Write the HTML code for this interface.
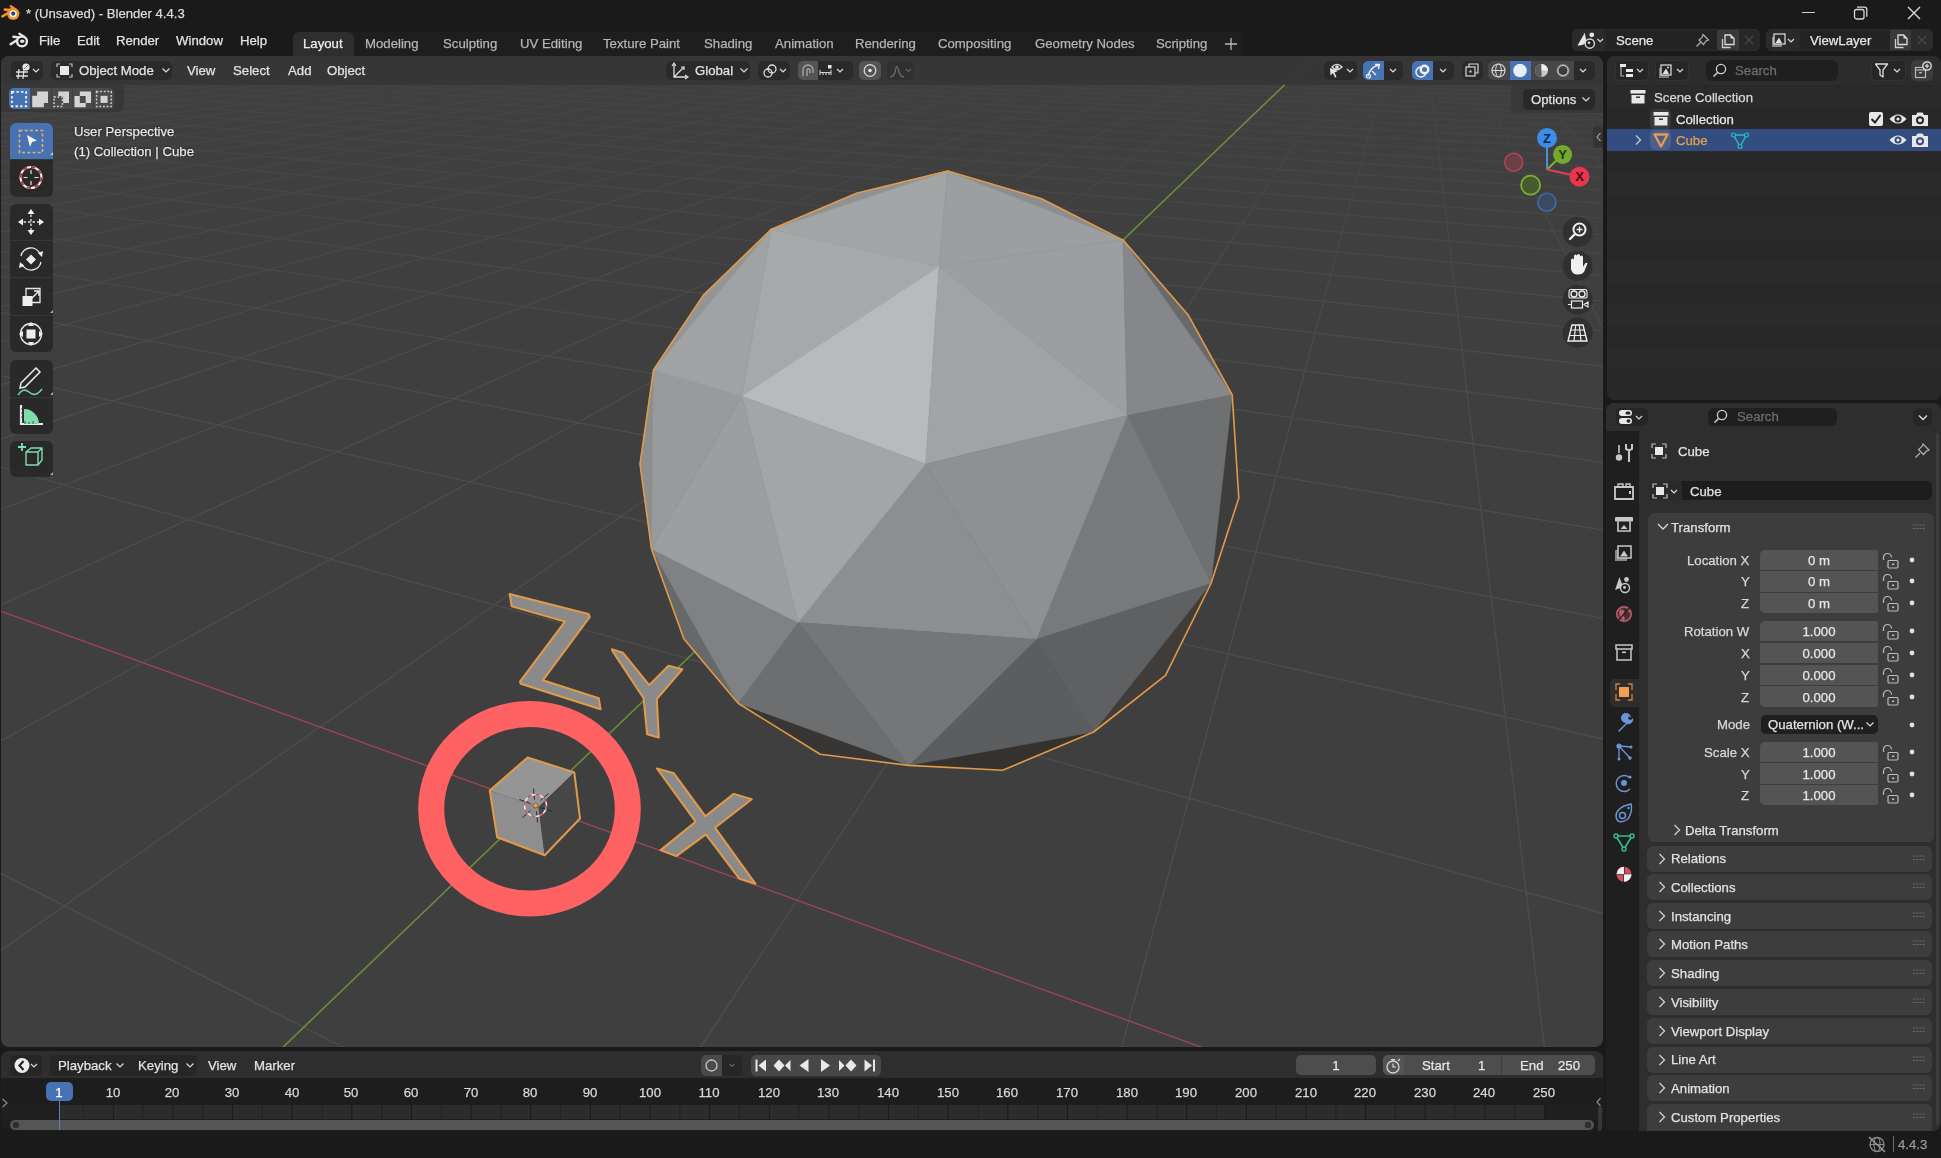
<!DOCTYPE html><html><head><meta charset="utf-8"><style>
html,body{margin:0;padding:0;}
body{width:1941px;height:1158px;background:#1a1a1a;position:relative;overflow:hidden;font-family:"Liberation Sans", sans-serif;}
.r{position:absolute;}
.t{position:absolute;white-space:pre;-webkit-text-stroke:0.25px currentColor;will-change:transform;}
</style></head><body>
<div class="r" style="left:1px;top:56px;width:1602px;height:991px;background:#3f3f3f;border-radius:8px;overflow:hidden;"><svg width="1602" height="991" style="position:absolute;left:0;top:0"><defs><linearGradient id="gf" x1="0" y1="0" x2="0" y2="1"><stop offset="0" stop-color="#fff" stop-opacity="0.2"/><stop offset="0.12" stop-color="#fff" stop-opacity="0.45"/><stop offset="0.35" stop-color="#fff" stop-opacity="0.9"/><stop offset="1" stop-color="#fff" stop-opacity="1"/></linearGradient><mask id="gm" maskUnits="userSpaceOnUse" x="0" y="0" width="1602" height="991"><rect width="1602" height="991" fill="url(#gf)"/></mask></defs><path d="M-392.0 1099.5L-114.8 1337.2M-399.4 614.5L1020.4 1335.8M-400.8 299.7L1991.1 965.9M-399.8 229.1L1992.5 771.5M-399.0 180.3L1993.5 637.1M-400.5 144.1L1994.3 538.7M-399.9 116.9L1994.8 463.5M-401.0 95.1L1995.3 404.2M-400.4 77.7L1995.6 356.2M-399.9 63.4L1995.9 316.6M-400.7 51.2L1996.2 283.3M-400.3 40.9L1996.4 254.9M-400.0 32.1L1996.6 230.5M-400.6 24.3L1996.7 209.3M-400.3 17.5L1996.9 190.6M-400.8 11.5L1997.0 174.0M-400.5 6.1L1997.1 159.3M-400.2 1.3L1997.2 146.0M-400.7 -3.1L1997.3 134.1M-400.5 -7.0L1997.4 123.2M-400.9 -10.6L1997.5 113.4M-400.6 -13.9L1997.5 104.3M-400.4 -16.9L1997.6 96.0M-400.8 -19.7L1997.6 88.4M-400.6 -22.2L1997.7 81.3M-400.9 -24.6L1997.7 74.8M-400.7 -26.8L1997.8 68.7M-400.5 -28.9L1997.8 63.0M-400.8 -30.8L1997.9 57.7M-400.7 -32.6L1997.9 52.7M-401.0 -34.3L1997.9 48.1M-400.8 -35.9L1998.0 43.7M-400.6 -37.4L1998.0 39.6M-400.9 -38.8L1998.0 35.7M-400.7 -40.1L1998.1 32.0M-401.0 -41.4L1998.1 28.5M-400.8 -42.6L1998.1 25.2M-400.7 -43.8L1998.1 22.1M-400.9 -44.8L1998.2 19.1M-400.8 -45.9L1998.2 16.2M-401.0 -46.9L1998.2 13.5M-400.8 -47.8L1998.2 11.0M-400.7 -48.7L1998.2 8.5M-400.9 -49.5L1998.3 6.1M-400.8 -50.4L1998.3 3.9M-401.0 -51.1L1998.3 1.7M-400.9 -51.9L1998.3 -0.3M-400.8 -52.6L1998.3 -2.3M-400.9 -53.3L1998.3 -4.2M-400.8 -54.0L1998.3 -6.1M-400.7 -54.6L1998.4 -7.8M-400.9 -55.2L1998.4 -9.5M-400.8 -55.8L1998.4 -11.2M-401.0 -56.4L1998.4 -12.7M-400.8 -57.0L1998.4 -14.3M-389.0 -57.3L1998.4 -15.7M-375.5 -57.6L1998.4 -17.1M-362.2 -57.9L1998.4 -18.5M-349.1 -58.1L1998.4 -19.8M-336.2 -58.4L1998.5 -21.1M-323.5 -58.7L1998.5 -22.4M-310.9 -59.0L1998.5 -23.6M-298.6 -59.2L1998.5 -24.7M-286.4 -59.5L1998.5 -25.9M-274.4 -59.7L1998.5 -27.0M-262.5 -60.0L1998.5 -28.0M-250.8 -60.2L1998.5 -29.0M-239.3 -60.5L1998.5 -30.1M-227.9 -60.7L1998.5 -31.0M-216.7 -61.0L1998.5 -32.0M-205.7 -61.2L1998.5 -32.9M-194.8 -61.4L1998.6 -33.8M-184.0 -61.7L1998.6 -34.7M-173.4 -61.9L1998.6 -35.5M-162.9 -62.1L1998.6 -36.3M-152.6 -62.3L1998.6 -37.1M-142.4 -62.6L1998.6 -37.9M-132.3 -62.8L1998.6 -38.7M-122.4 -63.0L1998.6 -39.4M-112.5 -63.2L1998.6 -40.2M-102.8 -63.4L1998.6 -40.9M-93.3 -63.6L1998.6 -41.6M-83.8 -63.8L1998.6 -42.2M-74.5 -64.0L1998.6 -42.9M-65.3 -64.2L1998.6 -43.5M-56.2 -64.4L1998.6 -44.2M-47.2 -64.6L1998.6 -44.8M-38.3 -64.8L1998.6 -45.4M-29.5 -65.0L1998.6 -46.0M-20.9 -65.2L1998.6 -46.5M-12.3 -65.4L1998.7 -47.1M-401.0 -57.0L-3.8 -65.5M-400.7 -56.8L1.3 -65.5M-400.8 -56.6L6.5 -65.4M-400.9 -56.4L11.8 -65.4M-400.9 -56.2L17.0 -65.3M-400.7 -56.0L22.3 -65.3M-400.7 -55.8L27.6 -65.3M-400.8 -55.6L33.0 -65.2M-400.9 -55.3L38.4 -65.2M-401.0 -55.1L43.8 -65.1M-400.7 -54.9L49.2 -65.1M-400.8 -54.7L54.7 -65.0M-400.9 -54.4L60.2 -65.0M-400.9 -54.2L65.8 -64.9M-400.7 -53.9L71.4 -64.9M-400.7 -53.7L77.0 -64.8M-400.8 -53.4L82.6 -64.8M-400.9 -53.2L88.3 -64.7M-401.0 -52.9L94.0 -64.7M-400.7 -52.7L99.8 -64.6M-400.8 -52.4L105.6 -64.6M-400.9 -52.2L111.4 -64.5M-401.0 -51.9L117.3 -64.5M-400.7 -51.6L123.2 -64.4M-400.8 -51.3L129.1 -64.3M-400.8 -51.0L135.1 -64.3M-400.9 -50.8L141.1 -64.2M-400.6 -50.5L147.2 -64.2M-400.7 -50.2L153.2 -64.1M-400.8 -49.9L159.4 -64.1M-400.9 -49.6L165.5 -64.0M-401.0 -49.2L171.7 -64.0M-400.7 -48.9L178.0 -63.9M-400.8 -48.6L184.3 -63.9M-400.9 -48.3L190.6 -63.8M-400.9 -47.9L197.0 -63.7M-400.6 -47.6L203.4 -63.7M-400.7 -47.3L209.8 -63.6M-400.8 -46.9L216.3 -63.6M-400.9 -46.5L222.9 -63.5M-400.6 -46.2L229.5 -63.5M-400.7 -45.8L236.1 -63.4M-400.8 -45.4L242.7 -63.3M-400.9 -45.0L249.5 -63.3M-401.0 -44.7L256.2 -63.2M-400.6 -44.3L263.0 -63.2M-400.7 -43.9L269.9 -63.1M-400.8 -43.4L276.8 -63.0M-400.9 -43.0L283.7 -63.0M-400.6 -42.6L290.7 -62.9M-400.7 -42.2L297.7 -62.8M-400.8 -41.7L304.8 -62.8M-400.9 -41.2L312.0 -62.7M-400.5 -40.8L319.1 -62.7M-400.6 -40.3L326.4 -62.6M-400.7 -39.8L333.7 -62.5M-400.8 -39.3L341.0 -62.5M-401.0 -38.8L348.4 -62.4M-400.6 -38.3L355.8 -62.3M-400.7 -37.8L363.3 -62.3M-400.8 -37.2L370.9 -62.2M-400.9 -36.7L378.5 -62.1M-400.5 -36.1L386.1 -62.1M-400.6 -35.6L393.8 -62.0M-400.7 -35.0L401.6 -61.9M-400.9 -34.4L409.4 -61.8M-401.0 -33.8L417.3 -61.8M-400.5 -33.1L425.2 -61.7M-400.7 -32.5L433.2 -61.6M-400.8 -31.8L441.2 -61.6M-400.9 -31.2L449.3 -61.5M-400.5 -30.5L457.5 -61.4M-400.6 -29.8L465.7 -61.3M-400.7 -29.0L474.0 -61.3M-400.9 -28.3L482.4 -61.2M-400.4 -27.5L490.8 -61.1M-400.5 -26.8L499.2 -61.0M-400.7 -25.9L507.8 -61.0M-400.8 -25.1L516.4 -60.9M-401.0 -24.3L525.1 -60.8M-400.4 -23.4L533.8 -60.7M-400.6 -22.5L542.6 -60.7M-400.8 -21.6L551.5 -60.6M-400.9 -20.6L560.4 -60.5M-400.4 -19.7L569.4 -60.4M-400.5 -18.7L578.5 -60.3M-400.7 -17.6L587.6 -60.3M-400.8 -16.6L596.8 -60.2M-400.3 -15.5L606.1 -60.1M-400.4 -14.3L615.5 -60.0M-400.6 -13.2L624.9 -59.9M-400.8 -12.0L634.4 -59.8M-400.9 -10.7L644.0 -59.8M-400.3 -9.4L653.7 -59.7M-400.5 -8.1L663.4 -59.6M-400.7 -6.7L673.3 -59.5M-400.9 -5.3L683.2 -59.4M-400.2 -3.8L693.1 -59.3M-400.4 -2.3L703.2 -59.2M-400.6 -0.7L713.3 -59.1M-400.8 1.0L723.6 -59.0M-401.0 2.7L733.9 -58.9M-400.2 4.4L744.3 -58.9M-400.5 6.3L754.8 -58.8M-400.7 8.2L765.4 -58.7M-400.9 10.3L776.0 -58.6M-400.1 12.3L786.8 -58.5M-400.3 14.5L797.6 -58.4M-400.6 16.8L808.6 -58.3M-400.8 19.2L819.6 -58.2M-399.9 21.7L830.7 -58.1M-400.2 24.3L841.9 -58.0M-400.4 27.1L853.2 -57.9M-400.7 30.0L864.7 -57.8M-401.0 33.0L876.2 -57.7M-400.0 36.1L887.8 -57.6M-400.2 39.5L899.5 -57.5M-400.5 43.1L911.4 -57.4M-400.8 46.9L923.3 -57.3M-399.7 50.8L935.3 -57.2M-400.0 55.1L947.5 -57.0M-400.3 59.6L959.7 -56.9M-400.7 64.4L972.1 -56.8M-399.4 69.4L984.6 -56.7M-399.7 74.9L997.2 -56.6M-400.1 80.8L1009.9 -56.5M-400.5 87.2L1022.7 -56.4M-400.9 94.0L1035.6 -56.3M-399.4 101.2L1048.7 -56.1M-399.8 109.2L1061.9 -56.0M-400.2 118.0L1075.2 -55.9M-400.7 127.5L1088.6 -55.8M-398.9 137.6L1102.2 -55.7M-399.3 149.1L1115.9 -55.5M-399.8 161.9L1129.7 -55.4M-400.4 176.1L1143.7 -55.3M-398.1 191.5L1157.8 -55.2M-398.6 209.3L1172.0 -55.0M-399.2 229.7L1186.4 -54.9M-399.9 253.0L1200.9 -54.8M-400.7 279.9L1215.5 -54.7M-397.5 310.6L1230.3 -54.5M-398.2 348.0L1245.3 -54.4M-399.1 393.2L1260.4 -54.2M-400.2 448.8L1275.6 -54.1M-395.1 516.8L1291.0 -54.0M-395.9 607.4L1306.6 -53.8M-397.0 729.8L1322.3 -53.7M-398.6 904.7L1338.2 -53.6M-401.0 1174.9L1354.2 -53.4M471.1 1338.1L1386.8 -53.1M1027.6 1334.8L1403.4 -53.0M1585.0 1343.5L1420.1 -52.8M1998.1 1051.1L1437.0 -52.7M1998.7 552.6L1454.1 -52.5M1998.9 355.6L1471.4 -52.4M1997.9 249.5L1488.8 -52.2M1998.2 184.0L1506.5 -52.1M1998.4 139.2L1524.3 -51.9M1998.5 106.7L1542.3 -51.7M1998.7 82.0L1560.6 -51.6M1998.7 62.6L1579.0 -51.4M1998.8 47.0L1597.6 -51.2M1998.9 34.1L1616.5 -51.1M1998.9 23.3L1635.5 -50.9M1999.0 14.2L1654.8 -50.7M1998.7 6.2L1674.3 -50.6M1998.7 -0.6L1694.0 -50.4M1998.8 -6.6L1713.9 -50.2M1998.8 -11.9L1734.1 -50.0M1998.8 -16.7L1754.5 -49.8M1998.9 -20.9L1775.2 -49.7M1998.9 -24.7L1796.1 -49.5M1998.9 -28.2L1817.2 -49.3M1999.0 -31.3L1838.6 -49.1M1999.0 -34.2L1860.2 -48.9M1999.0 -36.9L1882.2 -48.7M1998.8 -39.3L1904.3 -48.5M1998.8 -41.6L1926.8 -48.3M1998.9 -43.7L1949.5 -48.1M1998.9 -45.6L1972.5 -47.9M1998.9 -47.4L1995.8 -47.7" stroke="#4e4e4e" stroke-width="1.3" fill="none" mask="url(#gm)"/><line x1="-1.0" y1="554.8" x2="1699.0" y2="1172.3" stroke="#9c4452" stroke-width="1.4" stroke-opacity="1"/><line x1="182.5" y1="1086.8" x2="1399.0" y2="-82.1" stroke="#6b8c3a" stroke-width="1.6" stroke-opacity="1"/><polygon points="946.7,115.0 1040.6,142.7 1122.1,184.1" fill="#8b8d8f" stroke="#8b8d8f" stroke-width="0.6" stroke-linejoin="round" /><polygon points="1122.1,184.1 1187.0,258.7 1231.2,338.9" fill="#67696b" stroke="#67696b" stroke-width="0.6" stroke-linejoin="round" /><polygon points="1231.2,338.9 1237.8,442.0 1210.0,527.5" fill="#3d3d3d" stroke="#3d3d3d" stroke-width="0.6" stroke-linejoin="round" /><polygon points="1210.0,527.5 1164.5,619.3 1092.6,676.0" fill="#3f3c39" stroke="#3f3c39" stroke-width="0.6" stroke-linejoin="round" /><polygon points="1092.6,676.0 1001.6,714.3 908.0,709.4" fill="#34312e" stroke="#34312e" stroke-width="0.6" stroke-linejoin="round" /><polygon points="908.0,709.4 819.2,698.3 737.1,647.2" fill="#383634" stroke="#383634" stroke-width="0.6" stroke-linejoin="round" /><polygon points="737.1,647.2 682.8,582.7 650.5,493.0" fill="#66686a" stroke="#66686a" stroke-width="0.6" stroke-linejoin="round" /><polygon points="650.5,493.0 639.0,408.0 652.5,314.0" fill="#8c8e90" stroke="#8c8e90" stroke-width="0.6" stroke-linejoin="round" /><polygon points="652.5,314.0 702.2,239.4 769.9,173.6" fill="#929496" stroke="#929496" stroke-width="0.6" stroke-linejoin="round" /><polygon points="769.9,173.6 855.6,137.2 946.7,115.0" fill="#8f9193" stroke="#8f9193" stroke-width="0.6" stroke-linejoin="round" /><polygon points="946.7,115.0 769.9,173.6 938.1,210.4" fill="#a2a4a5" stroke="#a2a4a5" stroke-width="0.6" stroke-linejoin="round" /><polygon points="769.9,173.6 938.1,210.4 740.9,340.3" fill="#a6a8a9" stroke="#a6a8a9" stroke-width="0.6" stroke-linejoin="round" /><polygon points="946.7,115.0 1122.1,184.1 938.1,210.4" fill="#9c9ea0" stroke="#9c9ea0" stroke-width="0.6" stroke-linejoin="round" /><polygon points="938.1,210.4 1122.1,184.1 1126.3,359.6" fill="#9c9ea0" stroke="#9c9ea0" stroke-width="0.6" stroke-linejoin="round" /><polygon points="924.7,408.0 740.9,340.3 938.1,210.4" fill="#b8babb" stroke="#b8babb" stroke-width="0.6" stroke-linejoin="round" /><polygon points="924.7,408.0 938.1,210.4 1126.3,359.6" fill="#a1a3a4" stroke="#a1a3a4" stroke-width="0.6" stroke-linejoin="round" /><polygon points="1122.1,184.1 1231.2,338.9 1126.3,359.6" fill="#85878a" stroke="#85878a" stroke-width="0.6" stroke-linejoin="round" /><polygon points="1126.3,359.6 1231.2,338.9 1210.0,527.5" fill="#6e7072" stroke="#6e7072" stroke-width="0.6" stroke-linejoin="round" /><polygon points="1126.3,359.6 1210.0,527.5 1035.2,583.4" fill="#77797a" stroke="#77797a" stroke-width="0.6" stroke-linejoin="round" /><polygon points="924.7,408.0 1126.3,359.6 1035.2,583.4" fill="#8e9091" stroke="#8e9091" stroke-width="0.6" stroke-linejoin="round" /><polygon points="1035.2,583.4 1210.0,527.5 1092.6,676.0" fill="#5f6061" stroke="#5f6061" stroke-width="0.6" stroke-linejoin="round" /><polygon points="1035.2,583.4 1092.6,676.0 908.0,709.4" fill="#5c5d5e" stroke="#5c5d5e" stroke-width="0.6" stroke-linejoin="round" /><polygon points="924.7,408.0 1035.2,583.4 797.1,566.6" fill="#8c8e8f" stroke="#8c8e8f" stroke-width="0.6" stroke-linejoin="round" /><polygon points="797.1,566.6 1035.2,583.4 908.0,709.4" fill="#757677" stroke="#757677" stroke-width="0.6" stroke-linejoin="round" /><polygon points="797.1,566.6 908.0,709.4 737.1,647.2" fill="#6d6e6f" stroke="#6d6e6f" stroke-width="0.6" stroke-linejoin="round" /><polygon points="797.1,566.6 737.1,647.2 650.5,493.0" fill="#808183" stroke="#808183" stroke-width="0.6" stroke-linejoin="round" /><polygon points="924.7,408.0 797.1,566.6 740.9,340.3" fill="#a3a5a6" stroke="#a3a5a6" stroke-width="0.6" stroke-linejoin="round" /><polygon points="740.9,340.3 797.1,566.6 650.5,493.0" fill="#9c9ea0" stroke="#9c9ea0" stroke-width="0.6" stroke-linejoin="round" /><polygon points="740.9,340.3 650.5,493.0 652.5,314.0" fill="#989a9c" stroke="#989a9c" stroke-width="0.6" stroke-linejoin="round" /><polygon points="740.9,340.3 652.5,314.0 769.9,173.6" fill="#a0a2a3" stroke="#a0a2a3" stroke-width="0.6" stroke-linejoin="round" /><polygon points="946.7,115.0 1040.6,142.7 1122.1,184.1 1187.0,258.7 1231.2,338.9 1237.8,442.0 1210.0,527.5 1164.5,619.3 1092.6,676.0 1001.6,714.3 908.0,709.4 819.2,698.3 737.1,647.2 682.8,582.7 650.5,493.0 639.0,408.0 652.5,314.0 702.2,239.4 769.9,173.6 855.6,137.2" fill="none" stroke="#e39a48" stroke-width="1.6" stroke-linejoin="round"/><polygon points="508.7,538.0 587.4,558.0 588.8,560.8 541.8,624.3 597.8,642.3 599.6,653.3 519.7,627.8 519.0,625.7 563.9,565.6 510.7,550.4" fill="#8a8a8a" stroke="#e39a48" stroke-width="2" stroke-linejoin="round" /><polygon points="610.9,593.2 621.9,596.7 648.2,629.1 667.5,609.8 681.3,613.3 655.8,643.0 657.8,681.6 646.1,678.2 642.6,642.3 611.6,595.3" fill="#8a8a8a" stroke="#e39a48" stroke-width="2" stroke-linejoin="round" /><polygon points="655.9,712.5 672.9,717.3 704.3,760.2 732.7,737.9 750.8,743.3 714.0,771.7 754.5,827.9 738.1,822.5 704.9,778.4 675.3,800.1 659.6,794.1 694.6,765.7" fill="#8a8a8a" stroke="#e39a48" stroke-width="2" stroke-linejoin="round" /><polygon points="526.6,701.4 573.3,716.4 537.5,751.0 488.8,734.6" fill="#959595" /><polygon points="488.8,734.6 537.5,751.0 543.7,799.3 496.1,781.2" fill="#8e8e8e" /><polygon points="573.3,716.4 579.0,762.5 543.7,799.3 537.5,751.0" fill="#474747" /><polygon points="526.6,701.4 573.3,716.4 579.0,762.5 543.7,799.3 496.1,781.2 488.8,734.6" fill="none" stroke="#e39a48" stroke-width="2" stroke-linejoin="round" /><g transform="translate(534.5,749.5)"><line x1="-16" y1="-6" x2="-5" y2="-2" stroke="#2a2a2a" stroke-width="1"/><line x1="5" y1="2" x2="17" y2="6" stroke="#2a2a2a" stroke-width="1"/><line x1="-2" y1="-17" x2="-1" y2="-6" stroke="#2a2a2a" stroke-width="1"/><line x1="1" y1="6" x2="2" y2="17" stroke="#2a2a2a" stroke-width="1"/><line x1="13" y1="-12" x2="5" y2="-5" stroke="#2a2a2a" stroke-width="1"/><line x1="-5" y1="5" x2="-13" y2="12" stroke="#2a2a2a" stroke-width="1"/><circle r="11" fill="none" stroke="#e8e8e8" stroke-width="1.5"/><circle r="11" fill="none" stroke="#c04858" stroke-width="1.5" stroke-dasharray="4.3 4.3"/><circle r="2.4" fill="#f0a030" stroke="#444" stroke-width="0.6"/></g><ellipse cx="528.5" cy="752.8" rx="98.3" ry="94.8" fill="none" stroke="#fe6262" stroke-width="26"/><circle cx="1545.9" cy="146.2" r="9" fill="#3a4a60" stroke="#3f6aa8" stroke-width="1.6" fill-opacity="1"/><circle cx="1512.7" cy="106.3" r="9" fill="#6a4048" stroke="#b04455" stroke-width="1.6" fill-opacity="1"/><circle cx="1529.6" cy="129.2" r="9.5" fill="#4a5a30" stroke="#7ab030" stroke-width="1.8" fill-opacity="1"/><line x1="1546.0" y1="113.5" x2="1546.0" y2="82.0" stroke="#4a90e0" stroke-width="2" stroke-opacity="1"/><line x1="1546.0" y1="113.5" x2="1561.6" y2="98.5" stroke="#80b030" stroke-width="2" stroke-opacity="1"/><line x1="1546.0" y1="113.5" x2="1578.5" y2="120.8" stroke="#e04050" stroke-width="2" stroke-opacity="1"/><circle cx="1546.0" cy="82.0" r="10" fill="#3d8ce8" fill-opacity="1"/><circle cx="1561.6" cy="98.5" r="9.5" fill="#76a830" fill-opacity="1"/><circle cx="1578.5" cy="120.8" r="10" fill="#e8364e" fill-opacity="1"/><text x="1546" y="86.5" font-family="Liberation Sans" font-size="13" font-weight="bold" fill="#0c2a55" text-anchor="middle">Z</text><text x="1561.6" y="103.0" font-family="Liberation Sans" font-size="13" font-weight="bold" fill="#1c3a0a" text-anchor="middle">Y</text><text x="1578.5" y="125.30000000000001" font-family="Liberation Sans" font-size="13" font-weight="bold" fill="#4a0c14" text-anchor="middle">X</text><circle cx="1576.6" cy="176.0" r="15" fill="#2e2e2e" fill-opacity="0.85"/><circle cx="1576.6" cy="209.8" r="15" fill="#2e2e2e" fill-opacity="0.85"/><circle cx="1576.6" cy="243.7" r="15" fill="#2e2e2e" fill-opacity="0.85"/><circle cx="1576.6" cy="276.8" r="15" fill="#2e2e2e" fill-opacity="0.85"/></svg><div style="position:absolute;left:0;top:0;width:1602px;height:28px;background:rgba(40,40,40,0.55)"></div></div>
<svg class="r" style="left:0px;top:0px;" width="24" height="24" viewBox="0 0 24 24"><g stroke="#f0902a" stroke-linecap="round" fill="none"><path d="M10.8 6.3 L15.5 9.6" stroke-width="2.4"/><path d="M4.8 9.6 L12.5 10.2" stroke-width="2.6"/><path d="M2.4 16.4 L9.5 12" stroke-width="2.6"/></g><circle cx="13.2" cy="13.8" r="6.2" fill="#f0902a"/><circle cx="13.2" cy="13.8" r="3.6" fill="#f4f0ea"/><circle cx="13.2" cy="13.6" r="2.1" fill="#1a4a8a"/></svg>
<div class="t" style="left:26.4px;top:6.9px;font-size:13.1px;line-height:13.1px;color:#dcdcdc;font-weight:normal;">* (Unsaved) - Blender 4.4.3</div>
<div class="r" style="left:1802.0px;top:12.0px;width:12.5px;height:1.2px;background:#d0d0d0;border-radius:0px;"></div>
<svg class="r" style="left:1853px;top:5px;" width="16" height="16" viewBox="0 0 16 16"><rect x="1.5" y="4.5" width="9.5" height="9.5" rx="2" fill="none" stroke="#d8d8d8" stroke-width="1.3"/><path d="M4 2.2 H11.5 Q13.8 2.2 13.8 4.5 V11.8" fill="none" stroke="#d8d8d8" stroke-width="1.3"/></svg>
<svg class="r" style="left:1906px;top:5px;" width="16" height="16" viewBox="0 0 16 16"><path d="M2 2 L14 14 M14 2 L2 14" stroke="#dcdcdc" stroke-width="1.4"/></svg>
<svg class="r" style="left:0px;top:28px;" width="32" height="28" viewBox="0 0 32 28"><g stroke="#e6e6e6" stroke-linecap="round" fill="none"><path d="M19.3 5.6 L24 8.8" stroke-width="2.3"/><path d="M13.4 8.8 L21 9.6" stroke-width="2.4"/><path d="M10.6 16.2 L17.6 11.8" stroke-width="2.5"/></g><circle cx="22" cy="13.4" r="6.1" fill="#e6e6e6"/><circle cx="22" cy="13.4" r="3.7" fill="#1a1a1a"/><ellipse cx="22.2" cy="13.3" rx="2.2" ry="1.8" fill="#e6e6e6"/></svg>
<div class="t" style="left:38.6px;top:34.2px;font-size:13.2px;line-height:13.2px;color:#e2e2e2;font-weight:normal;">File</div>
<div class="t" style="left:76.5px;top:34.2px;font-size:13.2px;line-height:13.2px;color:#e2e2e2;font-weight:normal;">Edit</div>
<div class="t" style="left:116.0px;top:34.2px;font-size:13.2px;line-height:13.2px;color:#e2e2e2;font-weight:normal;">Render</div>
<div class="t" style="left:175.7px;top:34.2px;font-size:13.2px;line-height:13.2px;color:#e2e2e2;font-weight:normal;">Window</div>
<div class="t" style="left:240.0px;top:34.2px;font-size:13.2px;line-height:13.2px;color:#e2e2e2;font-weight:normal;">Help</div>
<div class="r" style="left:293.0px;top:32.0px;width:949.0px;height:24.0px;background:#1e1e1e;border-radius:0px;border-radius:6px 6px 0 0;"></div>
<div class="r" style="left:293.4px;top:32.3px;width:60.4px;height:23.7px;background:#2e2e2e;border-radius:0px;border-radius:6px 6px 0 0;"></div>
<div class="t" style="left:303.3px;top:37.0px;font-size:13.2px;line-height:13.2px;color:#eeeeee;font-weight:normal;">Layout</div>
<div class="t" style="left:365.3px;top:37.0px;font-size:13.2px;line-height:13.2px;color:#b4b4b4;font-weight:normal;">Modeling</div>
<div class="t" style="left:442.8px;top:37.0px;font-size:13.2px;line-height:13.2px;color:#b4b4b4;font-weight:normal;">Sculpting</div>
<div class="t" style="left:520.3px;top:37.0px;font-size:13.2px;line-height:13.2px;color:#b4b4b4;font-weight:normal;">UV Editing</div>
<div class="t" style="left:603.4px;top:37.0px;font-size:13.2px;line-height:13.2px;color:#b4b4b4;font-weight:normal;">Texture Paint</div>
<div class="t" style="left:703.6px;top:37.0px;font-size:13.2px;line-height:13.2px;color:#b4b4b4;font-weight:normal;">Shading</div>
<div class="t" style="left:774.5px;top:37.0px;font-size:13.2px;line-height:13.2px;color:#b4b4b4;font-weight:normal;">Animation</div>
<div class="t" style="left:854.6px;top:37.0px;font-size:13.2px;line-height:13.2px;color:#b4b4b4;font-weight:normal;">Rendering</div>
<div class="t" style="left:938.4px;top:37.0px;font-size:13.2px;line-height:13.2px;color:#b4b4b4;font-weight:normal;">Compositing</div>
<div class="t" style="left:1034.7px;top:37.0px;font-size:13.2px;line-height:13.2px;color:#b4b4b4;font-weight:normal;">Geometry Nodes</div>
<div class="t" style="left:1156.0px;top:37.0px;font-size:13.2px;line-height:13.2px;color:#b4b4b4;font-weight:normal;">Scripting</div>
<svg class="r" style="left:1224px;top:37px;" width="14" height="14" viewBox="0 0 14 14"><path d="M7 1 V13 M1 7 H13" stroke="#b8b8b8" stroke-width="1.3"/></svg>
<div class="r" style="left:1572.2px;top:29.0px;width:188.0px;height:22.0px;background:#232323;border-radius:5px;border:1px solid #2c2c2c;box-sizing:border-box;"></div>
<div class="r" style="left:1573.0px;top:30.0px;width:33.0px;height:20.0px;background:#2a2a2a;border-radius:4px;"></div>
<svg class="r" style="left:1574px;top:30px;" width="32" height="20" viewBox="0 0 32 20"><path d="M3.5 15.5 L10.8 2.8 L12.5 12 Q9 16 3.5 15.5 Z" fill="#e6e6e6"/><circle cx="17.8" cy="4.8" r="2.4" fill="#e6e6e6"/><circle cx="15.8" cy="13.6" r="4.6" fill="#232323" stroke="#d8d8d8" stroke-width="1.4"/><circle cx="15" cy="12.8" r="1.3" fill="#d8d8d8"/><path d="M23.5 9 L26.2 11.7 L29 9" fill="none" stroke="#dcdcdc" stroke-width="1.2"/></svg>
<div class="t" style="left:1616.0px;top:33.8px;font-size:13.2px;line-height:13.2px;color:#e6e6e6;font-weight:normal;">Scene</div>
<svg class="r" style="left:1694px;top:32px;" width="18" height="17" viewBox="0 0 18 17"><path d="M9 2.5 L14.5 8 L12 9 L9.5 12.5 L5 8 L8 5.5 Z" fill="none" stroke="#b0b0b0" stroke-width="1.2"/><path d="M6.5 10.5 L2.5 14.5" stroke="#b0b0b0" stroke-width="1.3"/></svg>
<div class="r" style="left:1717.0px;top:30.0px;width:22.0px;height:20.0px;background:#3a3a3a;border-radius:0px;"></div>
<div class="r" style="left:1739.0px;top:30.0px;width:20.5px;height:20.0px;background:#282828;border-radius:0px;border-radius:0 4px 4px 0;"></div>
<svg class="r" style="left:1718px;top:31px;" width="20" height="20" viewBox="0 0 20 20"><path d="M4.5 8 V16.5 H12.5" fill="none" stroke="#cfcfcf" stroke-width="1.3"/><path d="M7 4 H12.5 L16 7.5 V13.5 H7 Z" fill="none" stroke="#dcdcdc" stroke-width="1.3"/><path d="M12.5 4 V7.5 H16" fill="#dcdcdc"/></svg>
<svg class="r" style="left:1742px;top:33px;" width="14" height="14" viewBox="0 0 14 14"><path d="M3 3 L11 11 M11 3 L3 11" stroke="#484848" stroke-width="1.2"/></svg>
<div class="r" style="left:1766.4px;top:29.0px;width:166.9px;height:22.0px;background:#232323;border-radius:5px;border:1px solid #2c2c2c;box-sizing:border-box;"></div>
<div class="r" style="left:1767.0px;top:30.0px;width:33.0px;height:20.0px;background:#2a2a2a;border-radius:4px;"></div>
<svg class="r" style="left:1770px;top:31px;" width="30" height="18" viewBox="0 0 30 18"><rect x="2" y="6" width="10" height="10" fill="#888"/><rect x="4" y="3" width="11" height="10" fill="#2a2a2a" stroke="#e0e0e0" stroke-width="1.2"/><path d="M5.5 12 L9 6.5 L12 12 Z" fill="#e0e0e0"/><path d="M18 8 L21 11 L24 8" fill="none" stroke="#dcdcdc" stroke-width="1.2"/></svg>
<div class="t" style="left:1809.5px;top:33.8px;font-size:13.2px;line-height:13.2px;color:#e6e6e6;font-weight:normal;">ViewLayer</div>
<div class="r" style="left:1889.5px;top:30.0px;width:21.5px;height:20.0px;background:#3a3a3a;border-radius:0px;"></div>
<svg class="r" style="left:1891px;top:31px;" width="20" height="20" viewBox="0 0 20 20"><path d="M4.5 8 V16.5 H12.5" fill="none" stroke="#cfcfcf" stroke-width="1.3"/><path d="M7 4 H12.5 L16 7.5 V13.5 H7 Z" fill="none" stroke="#dcdcdc" stroke-width="1.3"/><path d="M12.5 4 V7.5 H16" fill="#dcdcdc"/></svg>
<div class="r" style="left:1911.0px;top:30.0px;width:21.5px;height:20.0px;background:#2c2c2c;border-radius:0px;border-radius:0 4px 4px 0;"></div>
<svg class="r" style="left:1915px;top:33px;" width="14" height="14" viewBox="0 0 14 14"><path d="M3 3 L11 11 M11 3 L3 11" stroke="#484848" stroke-width="1.2"/></svg>
<div class="r" style="left:1.0px;top:56.0px;width:1602.0px;height:29.0px;background:rgba(54,54,54,0.9);border-radius:0px;border-radius:8px 8px 0 0;"></div>
<div class="r" style="left:1.0px;top:85.0px;width:122.6px;height:27.0px;background:rgba(52,52,52,0.7);border-radius:0px;border-radius:0 0 6px 0;"></div>
<div class="r" style="left:10.7px;top:60.7px;width:32.2px;height:19.1px;background:#2a2a2a;border-radius:5px;"></div>
<svg class="r" style="left:13px;top:61px;" width="30" height="19" viewBox="0 0 30 19"><path d="M3 11 H15 M3 15 H15 M6 8 L5 18 M11 8 L10 18" stroke="#dedede" stroke-width="1.3"/><circle cx="13" cy="6" r="3.6" fill="#e8e8e8"/><path d="M11 8 L15 4" stroke="#666" stroke-width="0.8"/><path d="M20 8 L23 11 L26 8" fill="none" stroke="#dcdcdc" stroke-width="1.2"/></svg>
<div class="r" style="left:51.1px;top:60.7px;width:121.0px;height:19.1px;background:#2a2a2a;border-radius:5px;"></div>
<svg class="r" style="left:54px;top:61px;" width="22" height="19" viewBox="0 0 22 19"><rect x="6" y="5" width="9" height="9" fill="#e8e8e8"/><path d="M3 6 V3 H6 M15 3 H18 V6 M18 13 V16 H15 M6 16 H3 V13" fill="none" stroke="#bdbdbd" stroke-width="1.2"/></svg>
<div class="t" style="left:79.1px;top:63.8px;font-size:13.2px;line-height:13.2px;color:#e2e2e2;font-weight:normal;">Object Mode</div>
<svg class="r" style="left:160px;top:64px;" width="12" height="12" viewBox="0 0 12 12"><path d="M2.5 4.5 L6 8 L9.5 4.5" fill="none" stroke="#dcdcdc" stroke-width="1.2"/></svg>
<div class="t" style="left:187.3px;top:63.8px;font-size:13.2px;line-height:13.2px;color:#e2e2e2;font-weight:normal;">View</div>
<div class="t" style="left:232.8px;top:63.8px;font-size:13.2px;line-height:13.2px;color:#e2e2e2;font-weight:normal;">Select</div>
<div class="t" style="left:287.5px;top:63.8px;font-size:13.2px;line-height:13.2px;color:#e2e2e2;font-weight:normal;">Add</div>
<div class="t" style="left:327.4px;top:63.8px;font-size:13.2px;line-height:13.2px;color:#e2e2e2;font-weight:normal;">Object</div>
<div class="r" style="left:8.7px;top:88.4px;width:105.1px;height:20.7px;background:#4a4a4a;border-radius:5px;"></div>
<div class="r" style="left:8.7px;top:88.4px;width:21.0px;height:20.7px;background:#4772b3;border-radius:0px;border-radius:5px 0 0 5px;"></div>
<div class="r" style="left:50.6px;top:88.4px;width:1.0px;height:20.7px;background:#404040;border-radius:0px;"></div>
<div class="r" style="left:71.9px;top:88.4px;width:1.0px;height:20.7px;background:#404040;border-radius:0px;"></div>
<div class="r" style="left:93.2px;top:88.4px;width:1.0px;height:20.7px;background:#404040;border-radius:0px;"></div>
<svg class="r" style="left:0px;top:80px;" width="120" height="32" viewBox="0 0 120 32"><rect x="11.9" y="11.9" width="14.2" height="14.4" fill="none" stroke="#f4f4f4" stroke-width="1.9" stroke-dasharray="2.3 2.3"/><path d="M37.1 11.5 H48 V22.9 H43.9 V27.3 H32.2 V15.8 H37.1 Z" fill="#d4d4d4"/><path d="M58.2 11.5 H69 V22.9 H63.1 V16.1 H58.2 Z" fill="#d4d4d4"/><rect x="54" y="16.9" width="8.4" height="9.6" fill="none" stroke="#d4d4d4" stroke-width="1.5" stroke-dasharray="1.8 1.8"/><path d="M79.8 11.5 H91 V22.9 H85.7 V27.3 H74.5 V16.1 H79.8 Z M79.8 16.1 V22.9 H85.7 V16.1 Z" fill="#d4d4d4" fill-rule="evenodd"/><rect x="96.6" y="11.6" width="14.6" height="15" fill="none" stroke="#cfcfcf" stroke-width="1.5" stroke-dasharray="1.8 1.8"/><rect x="100.5" y="15.8" width="7.1" height="7.1" fill="#d4d4d4"/></svg>
<div class="r" style="left:666.4px;top:60.7px;width:84.0px;height:19.1px;background:#2a2a2a;border-radius:5px;"></div>
<svg class="r" style="left:670px;top:61px;" width="22" height="19" viewBox="0 0 22 19"><path d="M4 3 V16 H17 M4 16 L14 6" fill="none" stroke="#dedede" stroke-width="1.3"/><path d="M2 5 L4 2 L6 5 M15 14 L18 16 L15 18 M11 6 H14 V9" fill="none" stroke="#dedede" stroke-width="1.2"/></svg>
<div class="t" style="left:695.0px;top:63.8px;font-size:13.2px;line-height:13.2px;color:#e2e2e2;font-weight:normal;">Global</div>
<svg class="r" style="left:738px;top:64px;" width="12" height="12" viewBox="0 0 12 12"><path d="M2.5 4.5 L6 8 L9.5 4.5" fill="none" stroke="#dcdcdc" stroke-width="1.2"/></svg>
<div class="r" style="left:758.0px;top:60.7px;width:32.0px;height:19.1px;background:#2a2a2a;border-radius:5px;"></div>
<svg class="r" style="left:760px;top:61px;" width="30" height="19" viewBox="0 0 30 19"><circle cx="8" cy="12" r="4" fill="none" stroke="#dedede" stroke-width="1.3"/><circle cx="12" cy="8" r="4" fill="none" stroke="#dedede" stroke-width="1.3"/><path d="M20 8 L23 11 L26 8" fill="none" stroke="#dcdcdc" stroke-width="1.2"/></svg>
<div class="r" style="left:797.6px;top:60.7px;width:55.1px;height:19.1px;background:#2a2a2a;border-radius:5px;"></div>
<div class="r" style="left:797.6px;top:60.7px;width:20.9px;height:19.1px;background:#545454;border-radius:0px;border-radius:5px 0 0 5px;"></div>
<svg class="r" style="left:798px;top:61px;" width="56" height="19" viewBox="0 0 56 19"><path d="M5 15 V9 A5 5 0 0 1 15 9 V12 M9 15 V9 A1.6 1.6 0 0 1 12 9 V12" fill="none" stroke="#a8a8a8" stroke-width="1.3"/><path d="M22 14 V9 M22 11.5 H33 M25 14 V11 M28 14 V11 M31 14 V11 M33 14 V9" stroke="#d0d0d0" stroke-width="1.1"/><rect x="30" y="4" width="3.5" height="3.5" fill="#e8e8e8"/><path d="M39 8 L42 11 L45 8" fill="none" stroke="#dcdcdc" stroke-width="1.2"/></svg>
<div class="r" style="left:859.3px;top:60.7px;width:21.4px;height:19.1px;background:#545454;border-radius:5px;"></div>
<svg class="r" style="left:860px;top:61px;" width="20" height="19" viewBox="0 0 20 19"><circle cx="10" cy="9.5" r="5.8" fill="none" stroke="#d8d8d8" stroke-width="1.3"/><circle cx="10" cy="9.5" r="1.8" fill="#e8e8e8"/></svg>
<div class="r" style="left:886.6px;top:60.7px;width:27.0px;height:19.1px;background:#303030;border-radius:5px;"></div>
<svg class="r" style="left:887px;top:61px;" width="27" height="19" viewBox="0 0 27 19"><path d="M3 16 Q7 16 8.5 9 Q10 2 11.5 9 Q13 16 17 16" fill="none" stroke="#707070" stroke-width="1.2"/><path d="M19 8 L21.5 10.5 L24 8" fill="none" stroke="#666" stroke-width="1.1"/></svg>
<div class="r" style="left:1323.6px;top:60.7px;width:33.0px;height:19.1px;background:#2a2a2a;border-radius:5px;"></div>
<svg class="r" style="left:1325px;top:61px;" width="32" height="19" viewBox="0 0 32 19"><path d="M5 7 L13 10 L9.5 11.5 L11.5 16 L10 16.5 L8 12 L5.5 14.5 Z" fill="#e6e6e6"/><path d="M7 6 Q12 0.5 17 6 Q12 11 7 6 Z" fill="none" stroke="#e6e6e6" stroke-width="1.2"/><circle cx="12" cy="6" r="1.8" fill="#e6e6e6"/><path d="M22 8 L25 11 L28 8" fill="none" stroke="#dcdcdc" stroke-width="1.2"/></svg>
<div class="r" style="left:1362.8px;top:60.7px;width:39.8px;height:19.1px;background:#2a2a2a;border-radius:5px;"></div>
<div class="r" style="left:1362.8px;top:60.7px;width:21.1px;height:19.1px;background:#4772b3;border-radius:0px;border-radius:5px 0 0 5px;"></div>
<svg class="r" style="left:1363px;top:61px;" width="40" height="19" viewBox="0 0 40 19"><path d="M5 15 Q7 6 16 4" fill="none" stroke="#f0f0f0" stroke-width="1.3"/><path d="M12 3.5 L16.5 3.5 L15.5 8" fill="none" stroke="#f0f0f0" stroke-width="1.3"/><circle cx="5.5" cy="15" r="2" fill="none" stroke="#f0f0f0" stroke-width="1.2"/><path d="M9 10 L13 14" stroke="#f0f0f0" stroke-width="1.2"/><path d="M27 8 L30 11 L33 8" fill="none" stroke="#dcdcdc" stroke-width="1.2"/></svg>
<div class="r" style="left:1412.2px;top:60.7px;width:41.5px;height:19.1px;background:#2a2a2a;border-radius:5px;"></div>
<div class="r" style="left:1412.2px;top:60.7px;width:21.1px;height:19.1px;background:#4772b3;border-radius:0px;border-radius:5px 0 0 5px;"></div>
<svg class="r" style="left:1412px;top:61px;" width="42" height="19" viewBox="0 0 42 19"><circle cx="9" cy="11" r="5" fill="none" stroke="#f0f0f0" stroke-width="1.5"/><circle cx="12.5" cy="8.5" r="5" fill="#f0f0f0"/><circle cx="12.5" cy="8.5" r="2.5" fill="#4772b3"/><path d="M28 8 L31 11 L34 8" fill="none" stroke="#dcdcdc" stroke-width="1.2"/></svg>
<div class="r" style="left:1461.5px;top:60.7px;width:21.2px;height:19.1px;background:#2a2a2a;border-radius:5px;"></div>
<svg class="r" style="left:1462px;top:61px;" width="21" height="19" viewBox="0 0 21 19"><rect x="4" y="6" width="9" height="9" fill="none" stroke="#d8d8d8" stroke-width="1.2"/><path d="M7 6 V3 H16 V12 H13" fill="none" stroke="#d8d8d8" stroke-width="1.2"/><rect x="7.5" y="9.5" width="2" height="2" fill="#d8d8d8"/></svg>
<div class="r" style="left:1488.4px;top:60.7px;width:106.6px;height:19.1px;background:#2a2a2a;border-radius:5px;"></div>
<div class="r" style="left:1488.4px;top:60.7px;width:85.2px;height:19.1px;background:#474747;border-radius:0px;border-radius:5px 0 0 5px;"></div>
<div class="r" style="left:1509.7px;top:60.7px;width:21.3px;height:19.1px;background:#4772b3;border-radius:0px;"></div>
<svg class="r" style="left:1488px;top:61px;" width="108" height="19" viewBox="0 0 108 19"><circle cx="10.5" cy="9.5" r="6.5" fill="none" stroke="#d8d8d8" stroke-width="1.2"/><ellipse cx="10.5" cy="9.5" rx="2.8" ry="6.5" fill="none" stroke="#d8d8d8" stroke-width="1"/><path d="M4 9.5 H17" stroke="#d8d8d8" stroke-width="1"/><circle cx="32" cy="9.5" r="6.8" fill="#e8eef8"/><circle cx="53.5" cy="9.5" r="6.5" fill="#c8c8c8"/><path d="M53.5 3 A6.5 6.5 0 0 0 53.5 16 Z" fill="#5a5a5a"/><path d="M53.5 9.5 H60 A6.5 6.5 0 0 0 53.5 3 Z" fill="#eeeeee"/><circle cx="75" cy="9.5" r="6.5" fill="#8a8a8a"/><circle cx="75" cy="9.5" r="5" fill="#3c3c3c" stroke="#d0d0d0" stroke-width="1"/><path d="M92 8 L95 11 L98 8" fill="none" stroke="#dcdcdc" stroke-width="1.2"/></svg>
<div class="r" style="left:1511.0px;top:85.0px;width:92.0px;height:28.0px;background:rgba(52,52,52,0.6);border-radius:0px;border-radius:0 0 0 6px;"></div>
<div class="r" style="left:1522.5px;top:89.2px;width:72.5px;height:20.5px;background:rgba(40,40,40,0.95);border-radius:5px;"></div>
<div class="t" style="left:1531.0px;top:93.0px;font-size:13.2px;line-height:13.2px;color:#e2e2e2;font-weight:normal;">Options</div>
<svg class="r" style="left:1580px;top:93px;" width="12" height="12" viewBox="0 0 12 12"><path d="M2.5 4.5 L6 8 L9.5 4.5" fill="none" stroke="#dcdcdc" stroke-width="1.2"/></svg>
<div class="r" style="left:1593.0px;top:126.0px;width:10.0px;height:22.0px;background:rgba(50,50,50,0.8);border-radius:3px;"></div>
<svg class="r" style="left:1594px;top:130px;" width="9" height="14" viewBox="0 0 9 14"><path d="M6.5 3 L3 7 L6.5 11" fill="none" stroke="#aaaaaa" stroke-width="1.1"/></svg>
<div class="r" style="left:9.7px;top:123.1px;width:43.8px;height:73.6px;background:rgba(38,38,38,0.85);border-radius:6px;"></div>
<div class="r" style="left:9.7px;top:123.1px;width:43.8px;height:36.3px;background:#4772b3;border-radius:0px;border-radius:6px 6px 0 0;"></div>
<div class="r" style="left:9.7px;top:203.6px;width:43.8px;height:148.4px;background:rgba(38,38,38,0.85);border-radius:6px;"></div>
<div class="r" style="left:9.7px;top:359.7px;width:43.8px;height:74.6px;background:rgba(38,38,38,0.85);border-radius:6px;"></div>
<div class="r" style="left:9.7px;top:441.2px;width:43.8px;height:35.8px;background:rgba(38,38,38,0.85);border-radius:6px;"></div>
<svg class="r" style="left:9px;top:123px;" width="46" height="356" viewBox="0 0 46 356"><rect x="10.5" y="7.5" width="23" height="22" fill="none" stroke="#e8b060" stroke-width="1.6" stroke-dasharray="3 2.2"/><path d="M18 12 L28 17.5 L23 19 L21 24 Z" fill="#f4f4f4"/><path d="M41 32 L44 29 V32 Z" fill="#bcd"/><circle cx="22" cy="54.5" r="10.5" fill="none" stroke="#f0f0f0" stroke-width="2"/><circle cx="22" cy="54.5" r="10.5" fill="none" stroke="#c03040" stroke-width="2" stroke-dasharray="4.1 4.1"/><path d="M22 47 V51 M22 58 V62 M14.5 54.5 H18.5 M25.5 54.5 H29.5" stroke="#e8e8e8" stroke-width="1.2"/><path d="M22 87 V111 M10 99 H34" stroke="#e8e8e8" stroke-width="1.3" stroke-dasharray="2.5 2"/><path d="M22 86 L18.5 91 H25.5 Z M22 112 L18.5 107 H25.5 Z M9 99 L14 95.5 V102.5 Z M35 99 L30 95.5 V102.5 Z" fill="#eeeeee"/><path d="M12 133 A10 10 0 0 1 31 131 M32 139 A10 10 0 0 1 13 141" fill="none" stroke="#e8e8e8" stroke-width="1.4"/><path d="M22 131.5 L27 136.5 L22 141.5 L17 136.5 Z" fill="#eeeeee"/><path d="M29 130 L34 128 L33 134 Z M15 143 L10 145 L11 139 Z" fill="#eeeeee"/><g transform="translate(0,8)"><rect x="13.5" y="165" width="10" height="10" fill="#eeeeee"/><path d="M17 166 V157.5 H31 V171.5 H23" fill="none" stroke="#e8e8e8" stroke-width="1.3"/><path d="M21.5 168.5 L29.5 160.5 M25 160 H30 V165" fill="none" stroke="#eeeeee" stroke-width="1.4"/></g><path d="M41 190 L44 187 V190 Z" fill="#aaa"/><circle cx="22" cy="211" r="10.5" fill="none" stroke="#e8e8e8" stroke-width="1.4"/><rect x="17.5" y="206.5" width="9" height="9" fill="#eeeeee"/><path d="M22 199 L19 203 H25 Z M22 223 L19 219 H25 Z M10 211 L14 208 V214 Z M34 211 L30 208 V214 Z" fill="#eeeeee"/><g transform="translate(0,-4)"><path d="M12 264 L27 249 L31 253 L16 268 L11 269 Z" fill="none" stroke="#eeeeee" stroke-width="1.5"/><path d="M9 276 Q14 268 20 273 Q26 279 33 270" fill="none" stroke="#6ad2a0" stroke-width="1.6"/></g><path d="M41 272 L44 269 V272 Z" fill="#aaa"/><g transform="translate(0,-4)"><path d="M12 286 V305 H34" fill="none" stroke="#e8e8e8" stroke-width="2.2"/><path d="M15 305 V290 A15 15 0 0 1 30 305 Z" fill="#7fdcb0"/><path d="M12 290 H15 M12 294 H14 M12 298 H15 M16 305 V302 M20 305 V303 M24 305 V302" stroke="#333" stroke-width="0.8"/></g><path d="M17 329 H29 V342 H17 Z M17 329 L22 325 H33 L29 329 M33 325 V337 L29 342" fill="none" stroke="#7fdcb0" stroke-width="1.4" stroke-linejoin="round"/><path d="M9 324 H17 M13 320 V328" stroke="#7fdcb0" stroke-width="1.8"/><path d="M41 352 L44 349 V352 Z" fill="#aaa"/></svg>
<div class="r" style="left:9.7px;top:158.9px;width:43.8px;height:1.0px;background:rgba(80,80,80,0.35);border-radius:0px;"></div>
<div class="r" style="left:9.7px;top:240.1px;width:43.8px;height:1.0px;background:rgba(80,80,80,0.35);border-radius:0px;"></div>
<div class="r" style="left:9.7px;top:277.4px;width:43.8px;height:1.0px;background:rgba(80,80,80,0.35);border-radius:0px;"></div>
<div class="r" style="left:9.7px;top:314.7px;width:43.8px;height:1.0px;background:rgba(80,80,80,0.35);border-radius:0px;"></div>
<div class="r" style="left:9.7px;top:397.0px;width:43.8px;height:1.0px;background:rgba(80,80,80,0.35);border-radius:0px;"></div>
<div class="t" style="left:73.5px;top:125.2px;font-size:13.2px;line-height:13.2px;color:#e8e8e8;font-weight:normal;text-shadow:0 0 2px #000;">User Perspective</div>
<div class="t" style="left:73.5px;top:145.2px;font-size:13.2px;line-height:13.2px;color:#e8e8e8;font-weight:normal;text-shadow:0 0 2px #000;">(1) Collection | Cube</div>
<svg class="r" style="left:1562px;top:217px;" width="31" height="132" viewBox="0 0 31 132"><circle cx="17.5" cy="12.5" r="6" fill="none" stroke="#eeeeee" stroke-width="2"/><path d="M13 17 L8 22" stroke="#eeeeee" stroke-width="2.4" stroke-linecap="round"/><path d="M17.5 9.5 V15.5 M14.5 12.5 H20.5" stroke="#eeeeee" stroke-width="1.4"/><path d="M9 52 V43 Q9 41.5 10.5 41.5 Q12 41.5 12 43 V47 V39 Q12 37.5 13.5 37.5 Q15 37.5 15 39 V47 V38.5 Q15 37 16.5 37 Q18 37 18 38.5 V47 V40 Q18 38.5 19.5 38.5 Q21 38.5 21 40 V50 L23 46.5 Q24.5 45 25.5 46.5 L22 55 Q20 57.5 16 57.5 Q10 57.5 9 52 Z" fill="#f0f0f0"/><circle cx="12" cy="77" r="3" fill="none" stroke="#eee" stroke-width="1.3"/><circle cx="20" cy="77" r="3" fill="none" stroke="#eee" stroke-width="1.3"/><path d="M9 72.5 H23 Q25 72.5 25 75 V80 Q25 81 23 81 H9 Q7 81 7 80 V75 Q7 72.5 9 72.5 Z" fill="none" stroke="#eee" stroke-width="1.1"/><rect x="9.5" y="84" width="11" height="7" fill="none" stroke="#eee" stroke-width="1.2"/><path d="M22 87.5 L26 85 V90 Z M6 87.5 H9" fill="none" stroke="#eee" stroke-width="1.1"/><path d="M10 108 H21 L25 124 H6 Z" fill="none" stroke="#eee" stroke-width="1.4"/><path d="M8 113 H23 M7 118.5 H24 M13.7 108 L12 124 M17.3 108 L19 124" stroke="#eee" stroke-width="1.2"/></svg>
<div class="r" style="left:1606.5px;top:56.0px;width:334.5px;height:344.0px;background:#282828;border-radius:0px;border-radius:8px;"></div>
<div class="r" style="left:1606.5px;top:56.0px;width:334.5px;height:29.0px;background:#2c2c2c;border-radius:0px;border-radius:8px 8px 0 0;"></div>
<div class="r" style="left:1606.5px;top:86.6px;width:334.5px;height:21.8px;background:rgba(255,255,255,0.012);border-radius:0px;"></div>
<div class="r" style="left:1606.5px;top:130.1px;width:334.5px;height:21.8px;background:rgba(255,255,255,0.012);border-radius:0px;"></div>
<div class="r" style="left:1606.5px;top:173.6px;width:334.5px;height:21.8px;background:rgba(255,255,255,0.012);border-radius:0px;"></div>
<div class="r" style="left:1606.5px;top:217.1px;width:334.5px;height:21.8px;background:rgba(255,255,255,0.012);border-radius:0px;"></div>
<div class="r" style="left:1606.5px;top:260.6px;width:334.5px;height:21.8px;background:rgba(255,255,255,0.012);border-radius:0px;"></div>
<div class="r" style="left:1606.5px;top:304.1px;width:334.5px;height:21.8px;background:rgba(255,255,255,0.012);border-radius:0px;"></div>
<div class="r" style="left:1606.5px;top:347.6px;width:334.5px;height:21.8px;background:rgba(255,255,255,0.012);border-radius:0px;"></div>
<div class="r" style="left:1606.5px;top:391.1px;width:334.5px;height:0.9px;background:rgba(255,255,255,0.012);border-radius:0px;"></div>
<div class="r" style="left:1614.8px;top:59.7px;width:34.1px;height:21.0px;background:#262626;border-radius:5px;border:1px solid #333;box-sizing:border-box;"></div>
<svg class="r" style="left:1616px;top:60px;" width="33" height="21" viewBox="0 0 33 21"><rect x="4" y="4" width="6" height="3" fill="#e8e8e8"/><path d="M5 7 V16 H8" fill="none" stroke="#b0b0b0" stroke-width="1.2"/><rect x="10" y="9" width="7" height="3" fill="#e8e8e8"/><rect x="10" y="14" width="7" height="3" fill="#e8e8e8"/><path d="M21 9 L24 12 L27 9" fill="none" stroke="#dcdcdc" stroke-width="1.2"/></svg>
<div class="r" style="left:1654.6px;top:59.7px;width:34.1px;height:21.0px;background:#262626;border-radius:5px;border:1px solid #333;box-sizing:border-box;"></div>
<svg class="r" style="left:1656px;top:60px;" width="33" height="21" viewBox="0 0 33 21"><rect x="3" y="8" width="10" height="10" fill="#777"/><rect x="5" y="5" width="10" height="10" fill="#262626" stroke="#e0e0e0" stroke-width="1.2"/><path d="M6.5 14 L10 8.5 L13 14 Z" fill="#e0e0e0"/><circle cx="12" cy="7.5" r="1" fill="#e0e0e0"/><path d="M21 9 L24 12 L27 9" fill="none" stroke="#dcdcdc" stroke-width="1.2"/></svg>
<div class="r" style="left:1706.4px;top:59.7px;width:131.2px;height:21.0px;background:#1f1f1f;border-radius:6px;"></div>
<svg class="r" style="left:1710px;top:61px;" width="20" height="19" viewBox="0 0 20 19"><circle cx="11" cy="8" r="4.6" fill="none" stroke="#d0d0d0" stroke-width="1.3"/><path d="M7.8 11.3 L3.5 15.5" stroke="#d0d0d0" stroke-width="1.5"/></svg>
<div class="t" style="left:1735.0px;top:64.0px;font-size:13.2px;line-height:13.2px;color:#6e6e6e;font-weight:normal;">Search</div>
<div class="r" style="left:1871.0px;top:59.7px;width:34.7px;height:21.0px;background:#262626;border-radius:5px;border:1px solid #333;box-sizing:border-box;"></div>
<svg class="r" style="left:1872px;top:60px;" width="34" height="21" viewBox="0 0 34 21"><path d="M3.5 4 H15.5 L11 10 V17 L8 15 V10 Z" fill="none" stroke="#dcdcdc" stroke-width="1.3" stroke-linejoin="round"/><path d="M22 9 L25 12 L28 9" fill="none" stroke="#dcdcdc" stroke-width="1.2"/></svg>
<div class="r" style="left:1911.0px;top:59.7px;width:21.5px;height:21.0px;background:#3c3c3c;border-radius:5px;"></div>
<svg class="r" style="left:1912px;top:60px;" width="21" height="21" viewBox="0 0 21 21"><rect x="3.5" y="7.5" width="10" height="10" fill="none" stroke="#b8b8b8" stroke-width="1.2"/><path d="M3.5 10 H13.5" stroke="#b8b8b8" stroke-width="1.2"/><rect x="7" y="12" width="3" height="1.4" fill="#b8b8b8"/><circle cx="15" cy="6" r="4.2" fill="#3c3c3c" stroke="#e8e8e8" stroke-width="1.2"/><path d="M15 3.8 V8.2 M12.8 6 H17.2" stroke="#e8e8e8" stroke-width="1.2"/></svg>
<svg class="r" style="left:1629.3px;top:88.4px;" width="18" height="18" viewBox="0 0 18 18"><rect x="1.5" y="2" width="15" height="3.6" fill="#e8e8e8"/><path d="M2.5 7 H15.5 V15.5 H2.5 Z" fill="#e8e8e8"/><rect x="7" y="8.5" width="4" height="1.4" fill="#282828"/></svg>
<div class="t" style="left:1654.1px;top:91.0px;font-size:13.2px;line-height:13.2px;color:#d8d8d8;font-weight:normal;">Scene Collection</div>
<div class="r" style="left:1650.4px;top:108.5px;width:21.1px;height:21.0px;background:#3a3a3a;border-radius:5px;"></div>
<svg class="r" style="left:1652px;top:110px;" width="18" height="18" viewBox="0 0 18 18"><rect x="1.5" y="2" width="15" height="3.6" fill="#e8e8e8"/><path d="M2.5 7 H15.5 V15.5 H2.5 Z" fill="#e8e8e8"/><rect x="7" y="8.5" width="4" height="1.4" fill="#282828"/></svg>
<div class="t" style="left:1675.5px;top:112.5px;font-size:13.2px;line-height:13.2px;color:#e8e8e8;font-weight:normal;">Collection</div>
<svg class="r" style="left:1867px;top:110px;" width="18" height="18" viewBox="0 0 18 18"><rect x="2" y="2" width="14" height="14" rx="2" fill="#e8e8e8"/><path d="M4.5 9 L8 12.5 L13.5 5" fill="none" stroke="#222" stroke-width="2"/></svg>
<svg class="r" style="left:1888.3px;top:111px;" width="20" height="16" viewBox="0 0 20 16"><path d="M1.5 8 Q10 -1 18.5 8 Q10 17 1.5 8 Z" fill="#e8e8e8"/><circle cx="10" cy="8" r="3.5" fill="#282828"/><circle cx="10" cy="8" r="1.6" fill="#e8e8e8"/></svg>
<svg class="r" style="left:1910.1px;top:110px;" width="20" height="18" viewBox="0 0 20 18"><path d="M2 5 H6 L7.5 2.5 H12.5 L14 5 H18 V16 H2 Z" fill="#e8e8e8"/><circle cx="10" cy="10.3" r="4" fill="#282828"/><circle cx="10" cy="10.3" r="2" fill="#e8e8e8"/></svg>
<div class="r" style="left:1606.5px;top:129.4px;width:334.5px;height:21.3px;background:#334d80;border-radius:0px;"></div>
<svg class="r" style="left:1632px;top:133px;" width="12" height="14" viewBox="0 0 12 14"><path d="M4 2.5 L8.5 7 L4 11.5" fill="none" stroke="#c8c8c8" stroke-width="1.3"/></svg>
<div class="r" style="left:1650.4px;top:130.2px;width:21.1px;height:19.8px;background:#4a5f8a;border-radius:5px;"></div>
<svg class="r" style="left:1652px;top:131px;" width="18" height="18" viewBox="0 0 18 18"><path d="M2.5 3.5 H15.5 L9 15.5 Z" fill="none" stroke="#e89a50" stroke-width="2.3" stroke-linejoin="round"/></svg>
<div class="t" style="left:1676.0px;top:133.9px;font-size:13.2px;line-height:13.2px;color:#e8a050;font-weight:normal;">Cube</div>
<svg class="r" style="left:1730px;top:131px;" width="20" height="19" viewBox="0 0 20 19"><path d="M3.5 4 L16.5 4 L10 15.5 Z" fill="none" stroke="#20c0c0" stroke-width="1.4"/><circle cx="3.5" cy="4" r="2" fill="#334d80" stroke="#20c0c0" stroke-width="1.2"/><circle cx="16.5" cy="4" r="2" fill="#334d80" stroke="#20c0c0" stroke-width="1.2"/><circle cx="10" cy="15.5" r="2" fill="#334d80" stroke="#20c0c0" stroke-width="1.2"/></svg>
<svg class="r" style="left:1888.3px;top:132px;" width="20" height="16" viewBox="0 0 20 16"><path d="M1.5 8 Q10 -1 18.5 8 Q10 17 1.5 8 Z" fill="#e8e8e8"/><circle cx="10" cy="8" r="3.5" fill="#334d80"/><circle cx="10" cy="8" r="1.6" fill="#e8e8e8"/></svg>
<svg class="r" style="left:1910.1px;top:131px;" width="20" height="18" viewBox="0 0 20 18"><path d="M2 5 H6 L7.5 2.5 H12.5 L14 5 H18 V16 H2 Z" fill="#e8e8e8"/><circle cx="10" cy="10.3" r="4" fill="#334d80"/><circle cx="10" cy="10.3" r="2" fill="#e8e8e8"/></svg>
<div class="r" style="left:1605.5px;top:403.2px;width:335.5px;height:728.0px;background:#2e2e2e;border-radius:0px;border-radius:8px;"></div>
<div class="r" style="left:1605.5px;top:431.0px;width:33.0px;height:700.2px;background:#1f1f1f;border-radius:0px;border-radius:0 0 0 8px;"></div>
<div class="r" style="left:1615.5px;top:407.5px;width:32.2px;height:18.6px;background:#262626;border-radius:5px;"></div>
<svg class="r" style="left:1616px;top:407px;" width="32" height="20" viewBox="0 0 32 20"><rect x="3" y="3" width="13" height="6" rx="3" fill="#e8e8e8"/><rect x="9.5" y="4.5" width="5" height="3" rx="1.5" fill="#262626"/><rect x="3" y="11" width="13" height="6" rx="3" fill="#e8e8e8"/><rect x="10.5" y="12.2" width="4" height="3.6" rx="1.8" fill="#262626"/><path d="M20 9 L23 12 L26 9" fill="none" stroke="#dcdcdc" stroke-width="1.2"/></svg>
<div class="r" style="left:1708.2px;top:407.5px;width:129.1px;height:18.6px;background:#1f1f1f;border-radius:6px;"></div>
<svg class="r" style="left:1711px;top:407px;" width="20" height="20" viewBox="0 0 20 20"><circle cx="11" cy="8" r="4.6" fill="none" stroke="#d0d0d0" stroke-width="1.3"/><path d="M7.8 11.3 L3.5 15.5" stroke="#d0d0d0" stroke-width="1.5"/></svg>
<div class="t" style="left:1736.5px;top:410.4px;font-size:13.2px;line-height:13.2px;color:#6e6e6e;font-weight:normal;">Search</div>
<div class="r" style="left:1913.4px;top:407.5px;width:18.3px;height:18.6px;background:#262626;border-radius:5px;"></div>
<svg class="r" style="left:1914px;top:408px;" width="18" height="18" viewBox="0 0 18 18"><path d="M5 7.5 L9 11.5 L13 7.5" fill="none" stroke="#dcdcdc" stroke-width="1.4"/></svg>
<div class="r" style="left:1935.5px;top:433.0px;width:3.5px;height:692.0px;background:#3c3c3c;border-radius:2px;"></div>
<div class="r" style="left:1610.0px;top:678.6px;width:28.7px;height:28.0px;background:#2e2e2e;border-radius:5px;border-radius:5px 0 0 5px;"></div>
<svg class="r" style="left:1610px;top:440px;" width="29" height="450" viewBox="0 0 29 450"><path d="M9 5 V13" stroke="#c8c8c8" stroke-width="1.6"/><circle cx="9" cy="17.5" r="3.2" fill="#c8c8c8"/><path d="M16 4 V9 Q19 11 22 9 V4 M19 10 V22" fill="none" stroke="#c8c8c8" stroke-width="2"/><path d="M5 47 H23 V59 H5 Z" fill="none" stroke="#c8c8c8" stroke-width="1.8"/><path d="M8 47 V44 H13 V47 M16 47 V44 H20 V47" fill="none" stroke="#c8c8c8" stroke-width="1.4"/><rect x="19" y="51" width="2" height="3" fill="#c8c8c8"/><rect x="5" y="77" width="18" height="4.5" rx="1" fill="#c8c8c8"/><path d="M8 81.5 V91 H20 V81.5" fill="none" stroke="#c8c8c8" stroke-width="1.6"/><path d="M10.5 89 L14 85 L17.5 89 Z" fill="#c8c8c8"/><rect x="5" y="110" width="12" height="11" fill="#888"/><rect x="8" y="106" width="13" height="12" fill="#1f1f1f" stroke="#c8c8c8" stroke-width="1.5"/><path d="M10 116.5 L14 110.5 L18 116.5 Z" fill="#c8c8c8"/><path d="M5 150 L9.5 137 L13 147 Z" fill="#c8c8c8"/><circle cx="16.5" cy="139.5" r="2.4" fill="#c8c8c8"/><circle cx="15" cy="148" r="4.5" fill="#1f1f1f" stroke="#c8c8c8" stroke-width="1.4"/><circle cx="14.5" cy="147.5" r="1.4" fill="#c8c8c8"/><circle cx="14" cy="174" r="7.2" fill="#4a3035" stroke="#b85a68" stroke-width="1.7"/><path d="M9.5 170 Q13 168.5 14.5 171.5 Q12.5 175.5 15 178.5 L13.5 181 Q8 178 9.5 170 Z M16.5 167.5 Q19.5 170 20.5 173 L18 172 Z" fill="#b85a68"/><path d="M22 165 L6 183" stroke="#1f1f1f" stroke-width="1.3"/><rect x="6" y="205" width="16" height="4" fill="none" stroke="#c8c8c8" stroke-width="1.5"/><path d="M7 209 V220 H21 V209" fill="none" stroke="#c8c8c8" stroke-width="1.5"/><rect x="12" y="211.5" width="4" height="1.6" fill="#c8c8c8"/><rect x="9" y="247" width="10" height="10" fill="#f0a050"/><path d="M6 250 V244 H10 M18 244 H22 V250 M22 254 V260 H18 M10 260 H6 V254" fill="none" stroke="#d08040" stroke-width="1.3"/><path d="M8 291 L16 283 A5 5 0 1 1 21 278 L19 276 L18 279 L21 280 L23 278 A5 5 0 0 1 17 284 L9 292 Z" fill="#6a95d8"/><circle cx="9" cy="306" r="2.6" fill="#6a95d8"/><path d="M9 306 L21 307 M9 306 L20 318 M9 306 L9 319" stroke="#6a95d8" stroke-width="1.3"/><circle cx="21" cy="307" r="1.5" fill="#6a95d8"/><circle cx="20" cy="318" r="1.8" fill="#6a95d8"/><circle cx="9" cy="319" r="1.5" fill="#6a95d8"/><circle cx="14" cy="343" r="3" fill="#6a95d8"/><path d="M20 338 A8 8 0 1 0 20 349" fill="none" stroke="#6a95d8" stroke-width="1.5"/><circle cx="20" cy="337" r="1.6" fill="#6a95d8"/><path d="M6 376 Q6 370 14 366 L21 364 Q23 371 18 379 Q12 383 8 381 Q6 379 6 376 Z" fill="none" stroke="#6a95d8" stroke-width="1.5"/><circle cx="12.5" cy="375.5" r="3" fill="none" stroke="#6a95d8" stroke-width="1.5"/><circle cx="18.5" cy="368" r="1.2" fill="#6a95d8"/><path d="M6 396 H22 L14 409 Z" fill="none" stroke="#30c090" stroke-width="1.6"/><circle cx="6" cy="396" r="2" fill="#1f1f1f" stroke="#30c090" stroke-width="1.4"/><circle cx="22" cy="396" r="2" fill="#1f1f1f" stroke="#30c090" stroke-width="1.4"/><circle cx="14" cy="409" r="2" fill="#1f1f1f" stroke="#30c090" stroke-width="1.4"/><circle cx="14" cy="434.3" r="7.5" fill="#d05060"/><path d="M14 426.8 V441.8 M6.5 434.3 H21.5" stroke="#1f1f1f" stroke-width="1.2"/><path d="M14 434.3 H21.5 A7.5 7.5 0 0 1 14 441.8 Z" fill="#f0f0f0"/><path d="M14 434.3 H6.5 A7.5 7.5 0 0 1 14 426.8 Z" fill="#f0f0f0"/></svg>
<svg class="r" style="left:1649px;top:441px;" width="20" height="20" viewBox="0 0 20 20"><rect x="6" y="6" width="8" height="8" fill="#e8e8e8"/><path d="M3 7 V3 H7 M13 3 H17 V7 M17 13 V17 H13 M7 17 H3 V13" fill="none" stroke="#bdbdbd" stroke-width="1.2"/></svg>
<div class="t" style="left:1677.5px;top:444.6px;font-size:13.2px;line-height:13.2px;color:#e2e2e2;font-weight:normal;">Cube</div>
<svg class="r" style="left:1912px;top:441px;" width="20" height="20" viewBox="0 0 20 20"><path d="M11 3 L17 9 L14.5 10 L11.5 13.5 L6.5 8.5 L10 5.5 Z" fill="none" stroke="#b0b0b0" stroke-width="1.2"/><path d="M8 12 L3.5 16.5" stroke="#b0b0b0" stroke-width="1.3"/></svg>
<div class="r" style="left:1648.7px;top:481.4px;width:283.0px;height:18.8px;background:#1d1d1d;border-radius:5px;"></div>
<div class="r" style="left:1648.7px;top:481.4px;width:33.7px;height:18.8px;background:#2a2a2a;border-radius:0px;border-radius:5px 0 0 5px;"></div>
<svg class="r" style="left:1650px;top:481px;" width="32" height="20" viewBox="0 0 32 20"><rect x="6" y="6" width="8" height="8" fill="#e8e8e8"/><path d="M3 7 V3 H7 M13 3 H17 V7 M17 13 V17 H13 M7 17 H3 V13" fill="none" stroke="#bdbdbd" stroke-width="1.2"/><path d="M21 9 L24 12 L27 9" fill="none" stroke="#dcdcdc" stroke-width="1.2"/></svg>
<div class="t" style="left:1690.0px;top:484.6px;font-size:13.2px;line-height:13.2px;color:#e2e2e2;font-weight:normal;">Cube</div>
<div class="r" style="left:1647.7px;top:513.1px;width:286.0px;height:329.3px;background:#3d3d3d;border-radius:6px;"></div>
<svg class="r" style="left:1655px;top:518px;" width="16" height="18" viewBox="0 0 16 18"><path d="M3 6 L8 11 L13 6" fill="none" stroke="#dcdcdc" stroke-width="1.3"/></svg>
<div class="t" style="left:1671.1px;top:520.8px;font-size:13.2px;line-height:13.2px;color:#e2e2e2;font-weight:normal;">Transform</div>
<svg class="r" style="left:1912px;top:523px;" width="14" height="8" viewBox="0 0 14 8"><path d="M1 2 H13 M1 5.5 H13" stroke="#6a6a6a" stroke-width="1" stroke-dasharray="2 1.2"/></svg>
<div class="r" style="left:1760.0px;top:549.9px;width:118.2px;height:19.8px;background:#545454;border-radius:0px;border-radius:5px 2px 0 0;"></div>
<div class="t" style="right:191.5px;top:553.8px;font-size:13.2px;line-height:13.2px;color:#d8d8d8;font-weight:normal;">Location X</div>
<div class="t" style="left:1819.1px;transform:translateX(-50%);top:553.8px;font-size:13.2px;line-height:13.2px;color:#e6e6e6;font-weight:normal;">0 m</div>
<svg class="r" style="left:1880.5px;top:551.8px;" width="22" height="18" viewBox="0 0 22 18"><path d="M2.5 8 V5.5 A4 4 0 0 1 10.5 5.5" fill="none" stroke="#bdbdbd" stroke-width="1.2"/><rect x="7" y="8.5" width="10" height="7.5" rx="1.2" fill="none" stroke="#bdbdbd" stroke-width="1.2"/><rect x="11" y="11.5" width="2.2" height="1.6" fill="#bdbdbd"/></svg>
<svg class="r" style="left:1908.2px;top:555.8px;" width="8" height="8" viewBox="0 0 8 8"><circle cx="4" cy="4" r="2.4" fill="#e0e0e0"/></svg>
<div class="r" style="left:1760.0px;top:570.7px;width:118.2px;height:20.9px;background:#545454;border-radius:0px;"></div>
<div class="t" style="right:191.5px;top:575.2px;font-size:13.2px;line-height:13.2px;color:#d8d8d8;font-weight:normal;">Y</div>
<div class="t" style="left:1819.1px;transform:translateX(-50%);top:575.2px;font-size:13.2px;line-height:13.2px;color:#e6e6e6;font-weight:normal;">0 m</div>
<svg class="r" style="left:1880.5px;top:573.1500000000001px;" width="22" height="18" viewBox="0 0 22 18"><path d="M2.5 8 V5.5 A4 4 0 0 1 10.5 5.5" fill="none" stroke="#bdbdbd" stroke-width="1.2"/><rect x="7" y="8.5" width="10" height="7.5" rx="1.2" fill="none" stroke="#bdbdbd" stroke-width="1.2"/><rect x="11" y="11.5" width="2.2" height="1.6" fill="#bdbdbd"/></svg>
<svg class="r" style="left:1908.2px;top:577.1500000000001px;" width="8" height="8" viewBox="0 0 8 8"><circle cx="4" cy="4" r="2.4" fill="#e0e0e0"/></svg>
<div class="r" style="left:1760.0px;top:592.6px;width:118.2px;height:20.8px;background:#545454;border-radius:0px;border-radius:0 0 2px 5px;"></div>
<div class="t" style="right:191.5px;top:597.0px;font-size:13.2px;line-height:13.2px;color:#d8d8d8;font-weight:normal;">Z</div>
<div class="t" style="left:1819.1px;transform:translateX(-50%);top:597.0px;font-size:13.2px;line-height:13.2px;color:#e6e6e6;font-weight:normal;">0 m</div>
<svg class="r" style="left:1880.5px;top:595.0px;" width="22" height="18" viewBox="0 0 22 18"><path d="M2.5 8 V5.5 A4 4 0 0 1 10.5 5.5" fill="none" stroke="#bdbdbd" stroke-width="1.2"/><rect x="7" y="8.5" width="10" height="7.5" rx="1.2" fill="none" stroke="#bdbdbd" stroke-width="1.2"/><rect x="11" y="11.5" width="2.2" height="1.6" fill="#bdbdbd"/></svg>
<svg class="r" style="left:1908.2px;top:599.0px;" width="8" height="8" viewBox="0 0 8 8"><circle cx="4" cy="4" r="2.4" fill="#e0e0e0"/></svg>
<div class="r" style="left:1760.0px;top:621.3px;width:118.2px;height:20.2px;background:#545454;border-radius:0px;border-radius:5px 2px 0 0;"></div>
<div class="t" style="right:191.5px;top:625.4px;font-size:13.2px;line-height:13.2px;color:#d8d8d8;font-weight:normal;">Rotation W</div>
<div class="t" style="left:1819.1px;transform:translateX(-50%);top:625.4px;font-size:13.2px;line-height:13.2px;color:#e6e6e6;font-weight:normal;">1.000</div>
<svg class="r" style="left:1880.5px;top:623.4px;" width="22" height="18" viewBox="0 0 22 18"><path d="M2.5 8 V5.5 A4 4 0 0 1 10.5 5.5" fill="none" stroke="#bdbdbd" stroke-width="1.2"/><rect x="7" y="8.5" width="10" height="7.5" rx="1.2" fill="none" stroke="#bdbdbd" stroke-width="1.2"/><rect x="11" y="11.5" width="2.2" height="1.6" fill="#bdbdbd"/></svg>
<svg class="r" style="left:1908.2px;top:627.4px;" width="8" height="8" viewBox="0 0 8 8"><circle cx="4" cy="4" r="2.4" fill="#e0e0e0"/></svg>
<div class="r" style="left:1760.0px;top:642.6px;width:118.2px;height:20.3px;background:#545454;border-radius:0px;"></div>
<div class="t" style="right:191.5px;top:646.8px;font-size:13.2px;line-height:13.2px;color:#d8d8d8;font-weight:normal;">X</div>
<div class="t" style="left:1819.1px;transform:translateX(-50%);top:646.8px;font-size:13.2px;line-height:13.2px;color:#e6e6e6;font-weight:normal;">0.000</div>
<svg class="r" style="left:1880.5px;top:644.75px;" width="22" height="18" viewBox="0 0 22 18"><path d="M2.5 8 V5.5 A4 4 0 0 1 10.5 5.5" fill="none" stroke="#bdbdbd" stroke-width="1.2"/><rect x="7" y="8.5" width="10" height="7.5" rx="1.2" fill="none" stroke="#bdbdbd" stroke-width="1.2"/><rect x="11" y="11.5" width="2.2" height="1.6" fill="#bdbdbd"/></svg>
<svg class="r" style="left:1908.2px;top:648.75px;" width="8" height="8" viewBox="0 0 8 8"><circle cx="4" cy="4" r="2.4" fill="#e0e0e0"/></svg>
<div class="r" style="left:1760.0px;top:665.1px;width:118.2px;height:19.7px;background:#545454;border-radius:0px;"></div>
<div class="t" style="right:191.5px;top:669.0px;font-size:13.2px;line-height:13.2px;color:#d8d8d8;font-weight:normal;">Y</div>
<div class="t" style="left:1819.1px;transform:translateX(-50%);top:669.0px;font-size:13.2px;line-height:13.2px;color:#e6e6e6;font-weight:normal;">0.000</div>
<svg class="r" style="left:1880.5px;top:666.95px;" width="22" height="18" viewBox="0 0 22 18"><path d="M2.5 8 V5.5 A4 4 0 0 1 10.5 5.5" fill="none" stroke="#bdbdbd" stroke-width="1.2"/><rect x="7" y="8.5" width="10" height="7.5" rx="1.2" fill="none" stroke="#bdbdbd" stroke-width="1.2"/><rect x="11" y="11.5" width="2.2" height="1.6" fill="#bdbdbd"/></svg>
<svg class="r" style="left:1908.2px;top:670.95px;" width="8" height="8" viewBox="0 0 8 8"><circle cx="4" cy="4" r="2.4" fill="#e0e0e0"/></svg>
<div class="r" style="left:1760.0px;top:686.4px;width:118.2px;height:20.2px;background:#545454;border-radius:0px;border-radius:0 0 2px 5px;"></div>
<div class="t" style="right:191.5px;top:690.5px;font-size:13.2px;line-height:13.2px;color:#d8d8d8;font-weight:normal;">Z</div>
<div class="t" style="left:1819.1px;transform:translateX(-50%);top:690.5px;font-size:13.2px;line-height:13.2px;color:#e6e6e6;font-weight:normal;">0.000</div>
<svg class="r" style="left:1880.5px;top:688.5px;" width="22" height="18" viewBox="0 0 22 18"><path d="M2.5 8 V5.5 A4 4 0 0 1 10.5 5.5" fill="none" stroke="#bdbdbd" stroke-width="1.2"/><rect x="7" y="8.5" width="10" height="7.5" rx="1.2" fill="none" stroke="#bdbdbd" stroke-width="1.2"/><rect x="11" y="11.5" width="2.2" height="1.6" fill="#bdbdbd"/></svg>
<svg class="r" style="left:1908.2px;top:692.5px;" width="8" height="8" viewBox="0 0 8 8"><circle cx="4" cy="4" r="2.4" fill="#e0e0e0"/></svg>
<div class="r" style="left:1760.5px;top:714.9px;width:117.8px;height:19.3px;background:#1f1f1f;border-radius:5px;"></div>
<div class="t" style="right:191.5px;top:718.2px;font-size:13.2px;line-height:13.2px;color:#d8d8d8;font-weight:normal;">Mode</div>
<div class="t" style="left:1768.0px;top:718.2px;font-size:13.2px;line-height:13.2px;color:#e2e2e2;font-weight:normal;">Quaternion (W...</div>
<svg class="r" style="left:1864px;top:718px;" width="12" height="12" viewBox="0 0 12 12"><path d="M2.5 4.5 L6 8 L9.5 4.5" fill="none" stroke="#dcdcdc" stroke-width="1.2"/></svg>
<svg class="r" style="left:1908.2px;top:720.5px;" width="8" height="8" viewBox="0 0 8 8"><circle cx="4" cy="4" r="2.4" fill="#e0e0e0"/></svg>
<div class="r" style="left:1760.0px;top:741.9px;width:118.2px;height:19.7px;background:#545454;border-radius:0px;border-radius:5px 2px 0 0;"></div>
<div class="t" style="right:191.5px;top:745.8px;font-size:13.2px;line-height:13.2px;color:#d8d8d8;font-weight:normal;">Scale X</div>
<div class="t" style="left:1819.1px;transform:translateX(-50%);top:745.8px;font-size:13.2px;line-height:13.2px;color:#e6e6e6;font-weight:normal;">1.000</div>
<svg class="r" style="left:1880.5px;top:743.75px;" width="22" height="18" viewBox="0 0 22 18"><path d="M2.5 8 V5.5 A4 4 0 0 1 10.5 5.5" fill="none" stroke="#bdbdbd" stroke-width="1.2"/><rect x="7" y="8.5" width="10" height="7.5" rx="1.2" fill="none" stroke="#bdbdbd" stroke-width="1.2"/><rect x="11" y="11.5" width="2.2" height="1.6" fill="#bdbdbd"/></svg>
<svg class="r" style="left:1908.2px;top:747.75px;" width="8" height="8" viewBox="0 0 8 8"><circle cx="4" cy="4" r="2.4" fill="#e0e0e0"/></svg>
<div class="r" style="left:1760.0px;top:763.4px;width:118.2px;height:20.2px;background:#545454;border-radius:0px;"></div>
<div class="t" style="right:191.5px;top:767.5px;font-size:13.2px;line-height:13.2px;color:#d8d8d8;font-weight:normal;">Y</div>
<div class="t" style="left:1819.1px;transform:translateX(-50%);top:767.5px;font-size:13.2px;line-height:13.2px;color:#e6e6e6;font-weight:normal;">1.000</div>
<svg class="r" style="left:1880.5px;top:765.5px;" width="22" height="18" viewBox="0 0 22 18"><path d="M2.5 8 V5.5 A4 4 0 0 1 10.5 5.5" fill="none" stroke="#bdbdbd" stroke-width="1.2"/><rect x="7" y="8.5" width="10" height="7.5" rx="1.2" fill="none" stroke="#bdbdbd" stroke-width="1.2"/><rect x="11" y="11.5" width="2.2" height="1.6" fill="#bdbdbd"/></svg>
<svg class="r" style="left:1908.2px;top:769.5px;" width="8" height="8" viewBox="0 0 8 8"><circle cx="4" cy="4" r="2.4" fill="#e0e0e0"/></svg>
<div class="r" style="left:1760.0px;top:785.2px;width:118.2px;height:20.2px;background:#545454;border-radius:0px;border-radius:0 0 2px 5px;"></div>
<div class="t" style="right:191.5px;top:789.3px;font-size:13.2px;line-height:13.2px;color:#d8d8d8;font-weight:normal;">Z</div>
<div class="t" style="left:1819.1px;transform:translateX(-50%);top:789.3px;font-size:13.2px;line-height:13.2px;color:#e6e6e6;font-weight:normal;">1.000</div>
<svg class="r" style="left:1880.5px;top:787.3px;" width="22" height="18" viewBox="0 0 22 18"><path d="M2.5 8 V5.5 A4 4 0 0 1 10.5 5.5" fill="none" stroke="#bdbdbd" stroke-width="1.2"/><rect x="7" y="8.5" width="10" height="7.5" rx="1.2" fill="none" stroke="#bdbdbd" stroke-width="1.2"/><rect x="11" y="11.5" width="2.2" height="1.6" fill="#bdbdbd"/></svg>
<svg class="r" style="left:1908.2px;top:791.3px;" width="8" height="8" viewBox="0 0 8 8"><circle cx="4" cy="4" r="2.4" fill="#e0e0e0"/></svg>
<svg class="r" style="left:1670px;top:822px;" width="14" height="16" viewBox="0 0 14 16"><path d="M4.5 3 L9.5 8 L4.5 13" fill="none" stroke="#d0d0d0" stroke-width="1.3"/></svg>
<div class="t" style="left:1685.3px;top:823.8px;font-size:13.2px;line-height:13.2px;color:#e2e2e2;font-weight:normal;">Delta Transform</div>
<div class="r" style="left:1647.2px;top:845.5px;width:285.0px;height:26.0px;background:#3d3d3d;border-radius:6px;border-radius:6px 6px 6px 6px;"></div>
<svg class="r" style="left:1655px;top:850.5px;" width="14" height="16" viewBox="0 0 14 16"><path d="M4.5 3 L9.5 8 L4.5 13" fill="none" stroke="#d0d0d0" stroke-width="1.3"/></svg>
<div class="t" style="left:1670.6px;top:852.4px;font-size:13.2px;line-height:13.2px;color:#e2e2e2;font-weight:normal;">Relations</div>
<svg class="r" style="left:1912px;top:853.5px;" width="14" height="8" viewBox="0 0 14 8"><path d="M1 2 H13 M1 5.5 H13" stroke="#6a6a6a" stroke-width="1" stroke-dasharray="2 1.2"/></svg>
<div class="r" style="left:1647.2px;top:874.3px;width:285.0px;height:26.0px;background:#3d3d3d;border-radius:6px;border-radius:6px 6px 6px 6px;"></div>
<svg class="r" style="left:1655px;top:879.3px;" width="14" height="16" viewBox="0 0 14 16"><path d="M4.5 3 L9.5 8 L4.5 13" fill="none" stroke="#d0d0d0" stroke-width="1.3"/></svg>
<div class="t" style="left:1670.6px;top:881.2px;font-size:13.2px;line-height:13.2px;color:#e2e2e2;font-weight:normal;">Collections</div>
<svg class="r" style="left:1912px;top:882.3px;" width="14" height="8" viewBox="0 0 14 8"><path d="M1 2 H13 M1 5.5 H13" stroke="#6a6a6a" stroke-width="1" stroke-dasharray="2 1.2"/></svg>
<div class="r" style="left:1647.2px;top:902.6px;width:285.0px;height:26.0px;background:#3d3d3d;border-radius:6px;border-radius:6px 6px 6px 6px;"></div>
<svg class="r" style="left:1655px;top:907.6px;" width="14" height="16" viewBox="0 0 14 16"><path d="M4.5 3 L9.5 8 L4.5 13" fill="none" stroke="#d0d0d0" stroke-width="1.3"/></svg>
<div class="t" style="left:1670.6px;top:909.5px;font-size:13.2px;line-height:13.2px;color:#e2e2e2;font-weight:normal;">Instancing</div>
<svg class="r" style="left:1912px;top:910.6px;" width="14" height="8" viewBox="0 0 14 8"><path d="M1 2 H13 M1 5.5 H13" stroke="#6a6a6a" stroke-width="1" stroke-dasharray="2 1.2"/></svg>
<div class="r" style="left:1647.2px;top:931.4px;width:285.0px;height:26.0px;background:#3d3d3d;border-radius:6px;border-radius:6px 6px 6px 6px;"></div>
<svg class="r" style="left:1655px;top:936.4px;" width="14" height="16" viewBox="0 0 14 16"><path d="M4.5 3 L9.5 8 L4.5 13" fill="none" stroke="#d0d0d0" stroke-width="1.3"/></svg>
<div class="t" style="left:1670.6px;top:938.3px;font-size:13.2px;line-height:13.2px;color:#e2e2e2;font-weight:normal;">Motion Paths</div>
<svg class="r" style="left:1912px;top:939.4px;" width="14" height="8" viewBox="0 0 14 8"><path d="M1 2 H13 M1 5.5 H13" stroke="#6a6a6a" stroke-width="1" stroke-dasharray="2 1.2"/></svg>
<div class="r" style="left:1647.2px;top:960.3px;width:285.0px;height:26.0px;background:#3d3d3d;border-radius:6px;border-radius:6px 6px 6px 6px;"></div>
<svg class="r" style="left:1655px;top:965.3px;" width="14" height="16" viewBox="0 0 14 16"><path d="M4.5 3 L9.5 8 L4.5 13" fill="none" stroke="#d0d0d0" stroke-width="1.3"/></svg>
<div class="t" style="left:1670.6px;top:967.2px;font-size:13.2px;line-height:13.2px;color:#e2e2e2;font-weight:normal;">Shading</div>
<svg class="r" style="left:1912px;top:968.3px;" width="14" height="8" viewBox="0 0 14 8"><path d="M1 2 H13 M1 5.5 H13" stroke="#6a6a6a" stroke-width="1" stroke-dasharray="2 1.2"/></svg>
<div class="r" style="left:1647.2px;top:988.8px;width:285.0px;height:26.0px;background:#3d3d3d;border-radius:6px;border-radius:6px 6px 6px 6px;"></div>
<svg class="r" style="left:1655px;top:993.8px;" width="14" height="16" viewBox="0 0 14 16"><path d="M4.5 3 L9.5 8 L4.5 13" fill="none" stroke="#d0d0d0" stroke-width="1.3"/></svg>
<div class="t" style="left:1670.6px;top:995.7px;font-size:13.2px;line-height:13.2px;color:#e2e2e2;font-weight:normal;">Visibility</div>
<svg class="r" style="left:1912px;top:996.8px;" width="14" height="8" viewBox="0 0 14 8"><path d="M1 2 H13 M1 5.5 H13" stroke="#6a6a6a" stroke-width="1" stroke-dasharray="2 1.2"/></svg>
<div class="r" style="left:1647.2px;top:1017.6px;width:285.0px;height:26.0px;background:#3d3d3d;border-radius:6px;border-radius:6px 6px 6px 6px;"></div>
<svg class="r" style="left:1655px;top:1022.5999999999999px;" width="14" height="16" viewBox="0 0 14 16"><path d="M4.5 3 L9.5 8 L4.5 13" fill="none" stroke="#d0d0d0" stroke-width="1.3"/></svg>
<div class="t" style="left:1670.6px;top:1024.5px;font-size:13.2px;line-height:13.2px;color:#e2e2e2;font-weight:normal;">Viewport Display</div>
<svg class="r" style="left:1912px;top:1025.6px;" width="14" height="8" viewBox="0 0 14 8"><path d="M1 2 H13 M1 5.5 H13" stroke="#6a6a6a" stroke-width="1" stroke-dasharray="2 1.2"/></svg>
<div class="r" style="left:1647.2px;top:1046.5px;width:285.0px;height:26.0px;background:#3d3d3d;border-radius:6px;border-radius:6px 6px 6px 6px;"></div>
<svg class="r" style="left:1655px;top:1051.5px;" width="14" height="16" viewBox="0 0 14 16"><path d="M4.5 3 L9.5 8 L4.5 13" fill="none" stroke="#d0d0d0" stroke-width="1.3"/></svg>
<div class="t" style="left:1670.6px;top:1053.4px;font-size:13.2px;line-height:13.2px;color:#e2e2e2;font-weight:normal;">Line Art</div>
<svg class="r" style="left:1912px;top:1054.5px;" width="14" height="8" viewBox="0 0 14 8"><path d="M1 2 H13 M1 5.5 H13" stroke="#6a6a6a" stroke-width="1" stroke-dasharray="2 1.2"/></svg>
<div class="r" style="left:1647.2px;top:1075.3px;width:285.0px;height:26.0px;background:#3d3d3d;border-radius:6px;border-radius:6px 6px 6px 6px;"></div>
<svg class="r" style="left:1655px;top:1080.3px;" width="14" height="16" viewBox="0 0 14 16"><path d="M4.5 3 L9.5 8 L4.5 13" fill="none" stroke="#d0d0d0" stroke-width="1.3"/></svg>
<div class="t" style="left:1670.6px;top:1082.2px;font-size:13.2px;line-height:13.2px;color:#e2e2e2;font-weight:normal;">Animation</div>
<svg class="r" style="left:1912px;top:1083.3px;" width="14" height="8" viewBox="0 0 14 8"><path d="M1 2 H13 M1 5.5 H13" stroke="#6a6a6a" stroke-width="1" stroke-dasharray="2 1.2"/></svg>
<div class="r" style="left:1647.2px;top:1104.1px;width:285.0px;height:27.1px;background:#3d3d3d;border-radius:6px;border-radius:6px 6px 0 0;"></div>
<svg class="r" style="left:1655px;top:1109.1px;" width="14" height="16" viewBox="0 0 14 16"><path d="M4.5 3 L9.5 8 L4.5 13" fill="none" stroke="#d0d0d0" stroke-width="1.3"/></svg>
<div class="t" style="left:1670.6px;top:1111.0px;font-size:13.2px;line-height:13.2px;color:#e2e2e2;font-weight:normal;">Custom Properties</div>
<svg class="r" style="left:1912px;top:1112.1px;" width="14" height="8" viewBox="0 0 14 8"><path d="M1 2 H13 M1 5.5 H13" stroke="#6a6a6a" stroke-width="1" stroke-dasharray="2 1.2"/></svg>
<div class="r" style="left:1.0px;top:1051.2px;width:1602.8px;height:80.0px;background:#1d1d1d;border-radius:8px;"></div>
<div class="r" style="left:1.0px;top:1051.2px;width:1602.0px;height:27.2px;background:#2e2e2e;border-radius:0px;border-radius:8px 8px 0 0;"></div>
<div class="r" style="left:9.9px;top:1054.7px;width:32.3px;height:21.5px;background:#262626;border-radius:5px;"></div>
<svg class="r" style="left:11px;top:1055px;" width="32" height="21" viewBox="0 0 32 21"><circle cx="11" cy="10.5" r="7.5" fill="#ececec"/><path d="M12.5 6 L8.5 10.5 L12.5 15" fill="none" stroke="#262626" stroke-width="2.2"/><path d="M20 9 L23 12 L26 9" fill="none" stroke="#dcdcdc" stroke-width="1.2"/></svg>
<div class="r" style="left:49.5px;top:1054.7px;width:147.7px;height:21.5px;background:#262626;border-radius:5px;"></div>
<div class="t" style="left:57.5px;top:1058.8px;font-size:13.2px;line-height:13.2px;color:#e2e2e2;font-weight:normal;">Playback</div>
<svg class="r" style="left:114px;top:1059px;" width="12" height="12" viewBox="0 0 12 12"><path d="M2.5 4.5 L6 8 L9.5 4.5" fill="none" stroke="#dcdcdc" stroke-width="1.2"/></svg>
<div class="t" style="left:137.5px;top:1058.8px;font-size:13.2px;line-height:13.2px;color:#e2e2e2;font-weight:normal;">Keying</div>
<svg class="r" style="left:184px;top:1059px;" width="12" height="12" viewBox="0 0 12 12"><path d="M2.5 4.5 L6 8 L9.5 4.5" fill="none" stroke="#dcdcdc" stroke-width="1.2"/></svg>
<div class="t" style="left:208.4px;top:1058.8px;font-size:13.2px;line-height:13.2px;color:#e2e2e2;font-weight:normal;">View</div>
<div class="t" style="left:253.9px;top:1058.8px;font-size:13.2px;line-height:13.2px;color:#e2e2e2;font-weight:normal;">Marker</div>
<div class="r" style="left:701.0px;top:1054.7px;width:41.2px;height:21.5px;background:#262626;border-radius:5px;"></div>
<div class="r" style="left:701.0px;top:1054.7px;width:20.8px;height:21.5px;background:#4a4a4a;border-radius:0px;border-radius:5px 0 0 5px;"></div>
<svg class="r" style="left:701px;top:1055px;" width="42" height="21" viewBox="0 0 42 21"><circle cx="10.5" cy="10.5" r="5.5" fill="none" stroke="#c8c8c8" stroke-width="1.3"/><path d="M28.5 9 L31 11.5 L33.5 9" fill="none" stroke="#666" stroke-width="1.1"/></svg>
<div class="r" style="left:750.5px;top:1054.7px;width:130.2px;height:21.5px;background:#474747;border-radius:5px;"></div>
<svg class="r" style="left:750px;top:1055px;" width="131" height="21" viewBox="0 0 131 21"><rect x="5.5" y="4.5" width="2" height="12" fill="#e8e8e8"/><path d="M16 4.5 L8.5 10.5 L16 16.5 Z" fill="#e8e8e8"/><path d="M29 4.5 L23.5 10.5 L29 16.5 L34.5 10.5 Z M40.5 5 L35 10.5 L40.5 16 Z" fill="#e8e8e8"/><path d="M58.5 4 L49.5 10.5 L58.5 17 Z" fill="#e8e8e8"/><path d="M71 4 L80 10.5 L71 17 Z" fill="#e8e8e8"/><path d="M89 5 L94.5 10.5 L89 16 Z M101 4.5 L95.5 10.5 L101 16.5 L106.5 10.5 Z" fill="#e8e8e8"/><path d="M114.5 4.5 L122 10.5 L114.5 16.5 Z" fill="#e8e8e8"/><rect x="123" y="4.5" width="2" height="12" fill="#e8e8e8"/></svg>
<div class="r" style="left:1295.8px;top:1054.9px;width:80.2px;height:20.3px;background:#4d4d4d;border-radius:5px;"></div>
<div class="t" style="left:1335.9px;transform:translateX(-50%);top:1058.8px;font-size:13.2px;line-height:13.2px;color:#e6e6e6;font-weight:normal;">1</div>
<div class="r" style="left:1383.0px;top:1054.9px;width:212.3px;height:20.3px;background:#4d4d4d;border-radius:5px;"></div>
<div class="r" style="left:1383.0px;top:1054.9px;width:21.0px;height:20.3px;background:#545454;border-radius:0px;border-radius:5px 0 0 5px;"></div>
<svg class="r" style="left:1383px;top:1055px;" width="21" height="21" viewBox="0 0 21 21"><circle cx="10" cy="12" r="6" fill="none" stroke="#d8d8d8" stroke-width="1.3"/><path d="M10 8.5 V12 H13" fill="none" stroke="#d8d8d8" stroke-width="1.2"/><path d="M8 4.5 H12 M10 4.5 V6 M15 6 L17 4" stroke="#d8d8d8" stroke-width="1.2"/></svg>
<div class="r" style="left:1501.0px;top:1054.9px;width:1.0px;height:20.3px;background:#3e3e3e;border-radius:0px;"></div>
<div class="t" style="left:1421.9px;top:1058.8px;font-size:13.2px;line-height:13.2px;color:#e6e6e6;font-weight:normal;">Start</div>
<div class="t" style="right:455.5px;top:1058.8px;font-size:13.2px;line-height:13.2px;color:#e6e6e6;font-weight:normal;">1</div>
<div class="t" style="left:1519.6px;top:1058.8px;font-size:13.2px;line-height:13.2px;color:#e6e6e6;font-weight:normal;">End</div>
<div class="t" style="right:361.0px;top:1058.8px;font-size:13.2px;line-height:13.2px;color:#e6e6e6;font-weight:normal;">250</div>
<div class="r" style="left:1.0px;top:1104.6px;width:1602.0px;height:14.9px;background:#1f1f1f;border-radius:0px;"></div>
<div class="r" style="left:59.1px;top:1104.6px;width:1484.9px;height:14.9px;background:#2c2c2c;border-radius:0px;"></div>
<svg class="r" style="left:1px;top:1104.6px;" width="1602" height="15" viewBox="0 0 1602 15"><rect x="82.0" y="0" width="1" height="15" fill="#222222"/><rect x="111.8" y="0" width="1" height="15" fill="#1a1a1a"/><rect x="141.6" y="0" width="1" height="15" fill="#222222"/><rect x="171.4" y="0" width="1" height="15" fill="#1a1a1a"/><rect x="201.2" y="0" width="1" height="15" fill="#222222"/><rect x="231.0" y="0" width="1" height="15" fill="#1a1a1a"/><rect x="260.9" y="0" width="1" height="15" fill="#222222"/><rect x="290.7" y="0" width="1" height="15" fill="#1a1a1a"/><rect x="320.5" y="0" width="1" height="15" fill="#222222"/><rect x="350.3" y="0" width="1" height="15" fill="#1a1a1a"/><rect x="380.1" y="0" width="1" height="15" fill="#222222"/><rect x="409.9" y="0" width="1" height="15" fill="#1a1a1a"/><rect x="439.8" y="0" width="1" height="15" fill="#222222"/><rect x="469.6" y="0" width="1" height="15" fill="#1a1a1a"/><rect x="499.4" y="0" width="1" height="15" fill="#222222"/><rect x="529.2" y="0" width="1" height="15" fill="#1a1a1a"/><rect x="559.0" y="0" width="1" height="15" fill="#222222"/><rect x="588.9" y="0" width="1" height="15" fill="#1a1a1a"/><rect x="618.7" y="0" width="1" height="15" fill="#222222"/><rect x="648.5" y="0" width="1" height="15" fill="#1a1a1a"/><rect x="678.3" y="0" width="1" height="15" fill="#222222"/><rect x="708.1" y="0" width="1" height="15" fill="#1a1a1a"/><rect x="737.9" y="0" width="1" height="15" fill="#222222"/><rect x="767.8" y="0" width="1" height="15" fill="#1a1a1a"/><rect x="797.6" y="0" width="1" height="15" fill="#222222"/><rect x="827.4" y="0" width="1" height="15" fill="#1a1a1a"/><rect x="857.2" y="0" width="1" height="15" fill="#222222"/><rect x="887.0" y="0" width="1" height="15" fill="#1a1a1a"/><rect x="916.8" y="0" width="1" height="15" fill="#222222"/><rect x="946.7" y="0" width="1" height="15" fill="#1a1a1a"/><rect x="976.5" y="0" width="1" height="15" fill="#222222"/><rect x="1006.3" y="0" width="1" height="15" fill="#1a1a1a"/><rect x="1036.1" y="0" width="1" height="15" fill="#222222"/><rect x="1065.9" y="0" width="1" height="15" fill="#1a1a1a"/><rect x="1095.7" y="0" width="1" height="15" fill="#222222"/><rect x="1125.6" y="0" width="1" height="15" fill="#1a1a1a"/><rect x="1155.4" y="0" width="1" height="15" fill="#222222"/><rect x="1185.2" y="0" width="1" height="15" fill="#1a1a1a"/><rect x="1215.0" y="0" width="1" height="15" fill="#222222"/><rect x="1244.8" y="0" width="1" height="15" fill="#1a1a1a"/><rect x="1274.7" y="0" width="1" height="15" fill="#222222"/><rect x="1304.5" y="0" width="1" height="15" fill="#1a1a1a"/><rect x="1334.3" y="0" width="1" height="15" fill="#222222"/><rect x="1364.1" y="0" width="1" height="15" fill="#1a1a1a"/><rect x="1393.9" y="0" width="1" height="15" fill="#222222"/><rect x="1423.7" y="0" width="1" height="15" fill="#1a1a1a"/><rect x="1453.6" y="0" width="1" height="15" fill="#222222"/><rect x="1483.4" y="0" width="1" height="15" fill="#1a1a1a"/><rect x="1513.2" y="0" width="1" height="15" fill="#222222"/><rect x="1543.0" y="0" width="1" height="15" fill="#1a1a1a"/><rect x="1572.8" y="0" width="1" height="15" fill="#222222"/></svg>
<div class="t" style="left:112.8px;transform:translateX(-50%);top:1085.9px;font-size:13.2px;line-height:13.2px;color:#d8d8d8;font-weight:normal;">10</div>
<div class="t" style="left:172.4px;transform:translateX(-50%);top:1085.9px;font-size:13.2px;line-height:13.2px;color:#d8d8d8;font-weight:normal;">20</div>
<div class="t" style="left:232.0px;transform:translateX(-50%);top:1085.9px;font-size:13.2px;line-height:13.2px;color:#d8d8d8;font-weight:normal;">30</div>
<div class="t" style="left:291.7px;transform:translateX(-50%);top:1085.9px;font-size:13.2px;line-height:13.2px;color:#d8d8d8;font-weight:normal;">40</div>
<div class="t" style="left:351.3px;transform:translateX(-50%);top:1085.9px;font-size:13.2px;line-height:13.2px;color:#d8d8d8;font-weight:normal;">50</div>
<div class="t" style="left:410.9px;transform:translateX(-50%);top:1085.9px;font-size:13.2px;line-height:13.2px;color:#d8d8d8;font-weight:normal;">60</div>
<div class="t" style="left:470.6px;transform:translateX(-50%);top:1085.9px;font-size:13.2px;line-height:13.2px;color:#d8d8d8;font-weight:normal;">70</div>
<div class="t" style="left:530.2px;transform:translateX(-50%);top:1085.9px;font-size:13.2px;line-height:13.2px;color:#d8d8d8;font-weight:normal;">80</div>
<div class="t" style="left:589.9px;transform:translateX(-50%);top:1085.9px;font-size:13.2px;line-height:13.2px;color:#d8d8d8;font-weight:normal;">90</div>
<div class="t" style="left:649.5px;transform:translateX(-50%);top:1085.9px;font-size:13.2px;line-height:13.2px;color:#d8d8d8;font-weight:normal;">100</div>
<div class="t" style="left:709.1px;transform:translateX(-50%);top:1085.9px;font-size:13.2px;line-height:13.2px;color:#d8d8d8;font-weight:normal;">110</div>
<div class="t" style="left:768.8px;transform:translateX(-50%);top:1085.9px;font-size:13.2px;line-height:13.2px;color:#d8d8d8;font-weight:normal;">120</div>
<div class="t" style="left:828.4px;transform:translateX(-50%);top:1085.9px;font-size:13.2px;line-height:13.2px;color:#d8d8d8;font-weight:normal;">130</div>
<div class="t" style="left:888.0px;transform:translateX(-50%);top:1085.9px;font-size:13.2px;line-height:13.2px;color:#d8d8d8;font-weight:normal;">140</div>
<div class="t" style="left:947.7px;transform:translateX(-50%);top:1085.9px;font-size:13.2px;line-height:13.2px;color:#d8d8d8;font-weight:normal;">150</div>
<div class="t" style="left:1007.3px;transform:translateX(-50%);top:1085.9px;font-size:13.2px;line-height:13.2px;color:#d8d8d8;font-weight:normal;">160</div>
<div class="t" style="left:1066.9px;transform:translateX(-50%);top:1085.9px;font-size:13.2px;line-height:13.2px;color:#d8d8d8;font-weight:normal;">170</div>
<div class="t" style="left:1126.6px;transform:translateX(-50%);top:1085.9px;font-size:13.2px;line-height:13.2px;color:#d8d8d8;font-weight:normal;">180</div>
<div class="t" style="left:1186.2px;transform:translateX(-50%);top:1085.9px;font-size:13.2px;line-height:13.2px;color:#d8d8d8;font-weight:normal;">190</div>
<div class="t" style="left:1245.8px;transform:translateX(-50%);top:1085.9px;font-size:13.2px;line-height:13.2px;color:#d8d8d8;font-weight:normal;">200</div>
<div class="t" style="left:1305.5px;transform:translateX(-50%);top:1085.9px;font-size:13.2px;line-height:13.2px;color:#d8d8d8;font-weight:normal;">210</div>
<div class="t" style="left:1365.1px;transform:translateX(-50%);top:1085.9px;font-size:13.2px;line-height:13.2px;color:#d8d8d8;font-weight:normal;">220</div>
<div class="t" style="left:1424.7px;transform:translateX(-50%);top:1085.9px;font-size:13.2px;line-height:13.2px;color:#d8d8d8;font-weight:normal;">230</div>
<div class="t" style="left:1484.4px;transform:translateX(-50%);top:1085.9px;font-size:13.2px;line-height:13.2px;color:#d8d8d8;font-weight:normal;">240</div>
<div class="t" style="left:1544.0px;transform:translateX(-50%);top:1085.9px;font-size:13.2px;line-height:13.2px;color:#d8d8d8;font-weight:normal;">250</div>
<div class="r" style="left:10.0px;top:1120.3px;width:1584.0px;height:9.3px;background:#555555;border-radius:5px;"></div>
<svg class="r" style="left:10px;top:1120px;" width="12" height="10" viewBox="0 0 12 10"><circle cx="6" cy="5" r="3.2" fill="#2e2e2e"/></svg>
<svg class="r" style="left:1582px;top:1120px;" width="12" height="10" viewBox="0 0 12 10"><circle cx="6" cy="5" r="3.2" fill="#2e2e2e"/></svg>
<div class="r" style="left:58.6px;top:1100.0px;width:1.5px;height:30.0px;background:#5a82c0;border-radius:0px;"></div>
<div class="r" style="left:45.5px;top:1081.8px;width:27.7px;height:19.1px;background:#4772b3;border-radius:5px;"></div>
<div class="t" style="left:59.3px;transform:translateX(-50%);top:1085.9px;font-size:13.2px;line-height:13.2px;color:#ffffff;font-weight:normal;">1</div>
<svg class="r" style="left:-1px;top:1096px;" width="12" height="14" viewBox="0 0 12 14"><path d="M3.5 3 L8 7 L3.5 11" fill="none" stroke="#8a8a8a" stroke-width="1.2"/></svg>
<div class="r" style="left:1597.6px;top:1106.5px;width:4.6px;height:24.0px;background:#363636;border-radius:0px;border-radius:0 0 4px 2px;"></div>
<svg class="r" style="left:1591px;top:1095px;" width="12" height="14" viewBox="0 0 12 14"><path d="M9.5 3 L6 7 L9.5 11" fill="none" stroke="#8a8a8a" stroke-width="1.2"/></svg>
<svg class="r" style="left:1866px;top:1135px;" width="22" height="19" viewBox="0 0 22 19"><circle cx="11" cy="9.5" r="7" fill="none" stroke="#8a8a8a" stroke-width="1.3"/><ellipse cx="11" cy="9.5" rx="3" ry="7" fill="none" stroke="#8a8a8a" stroke-width="1.1"/><path d="M4 9.5 H18" stroke="#8a8a8a" stroke-width="1.1"/><path d="M3 2 L19 17" stroke="#9a9a9a" stroke-width="1.5"/></svg>
<div class="r" style="left:1892.5px;top:1136.0px;width:1.3px;height:16.0px;background:#6a6a6a;border-radius:0px;"></div>
<div class="t" style="left:1897.9px;top:1138.0px;font-size:13.2px;line-height:13.2px;color:#9a9a9a;font-weight:normal;">4.4.3</div>
</body></html>
